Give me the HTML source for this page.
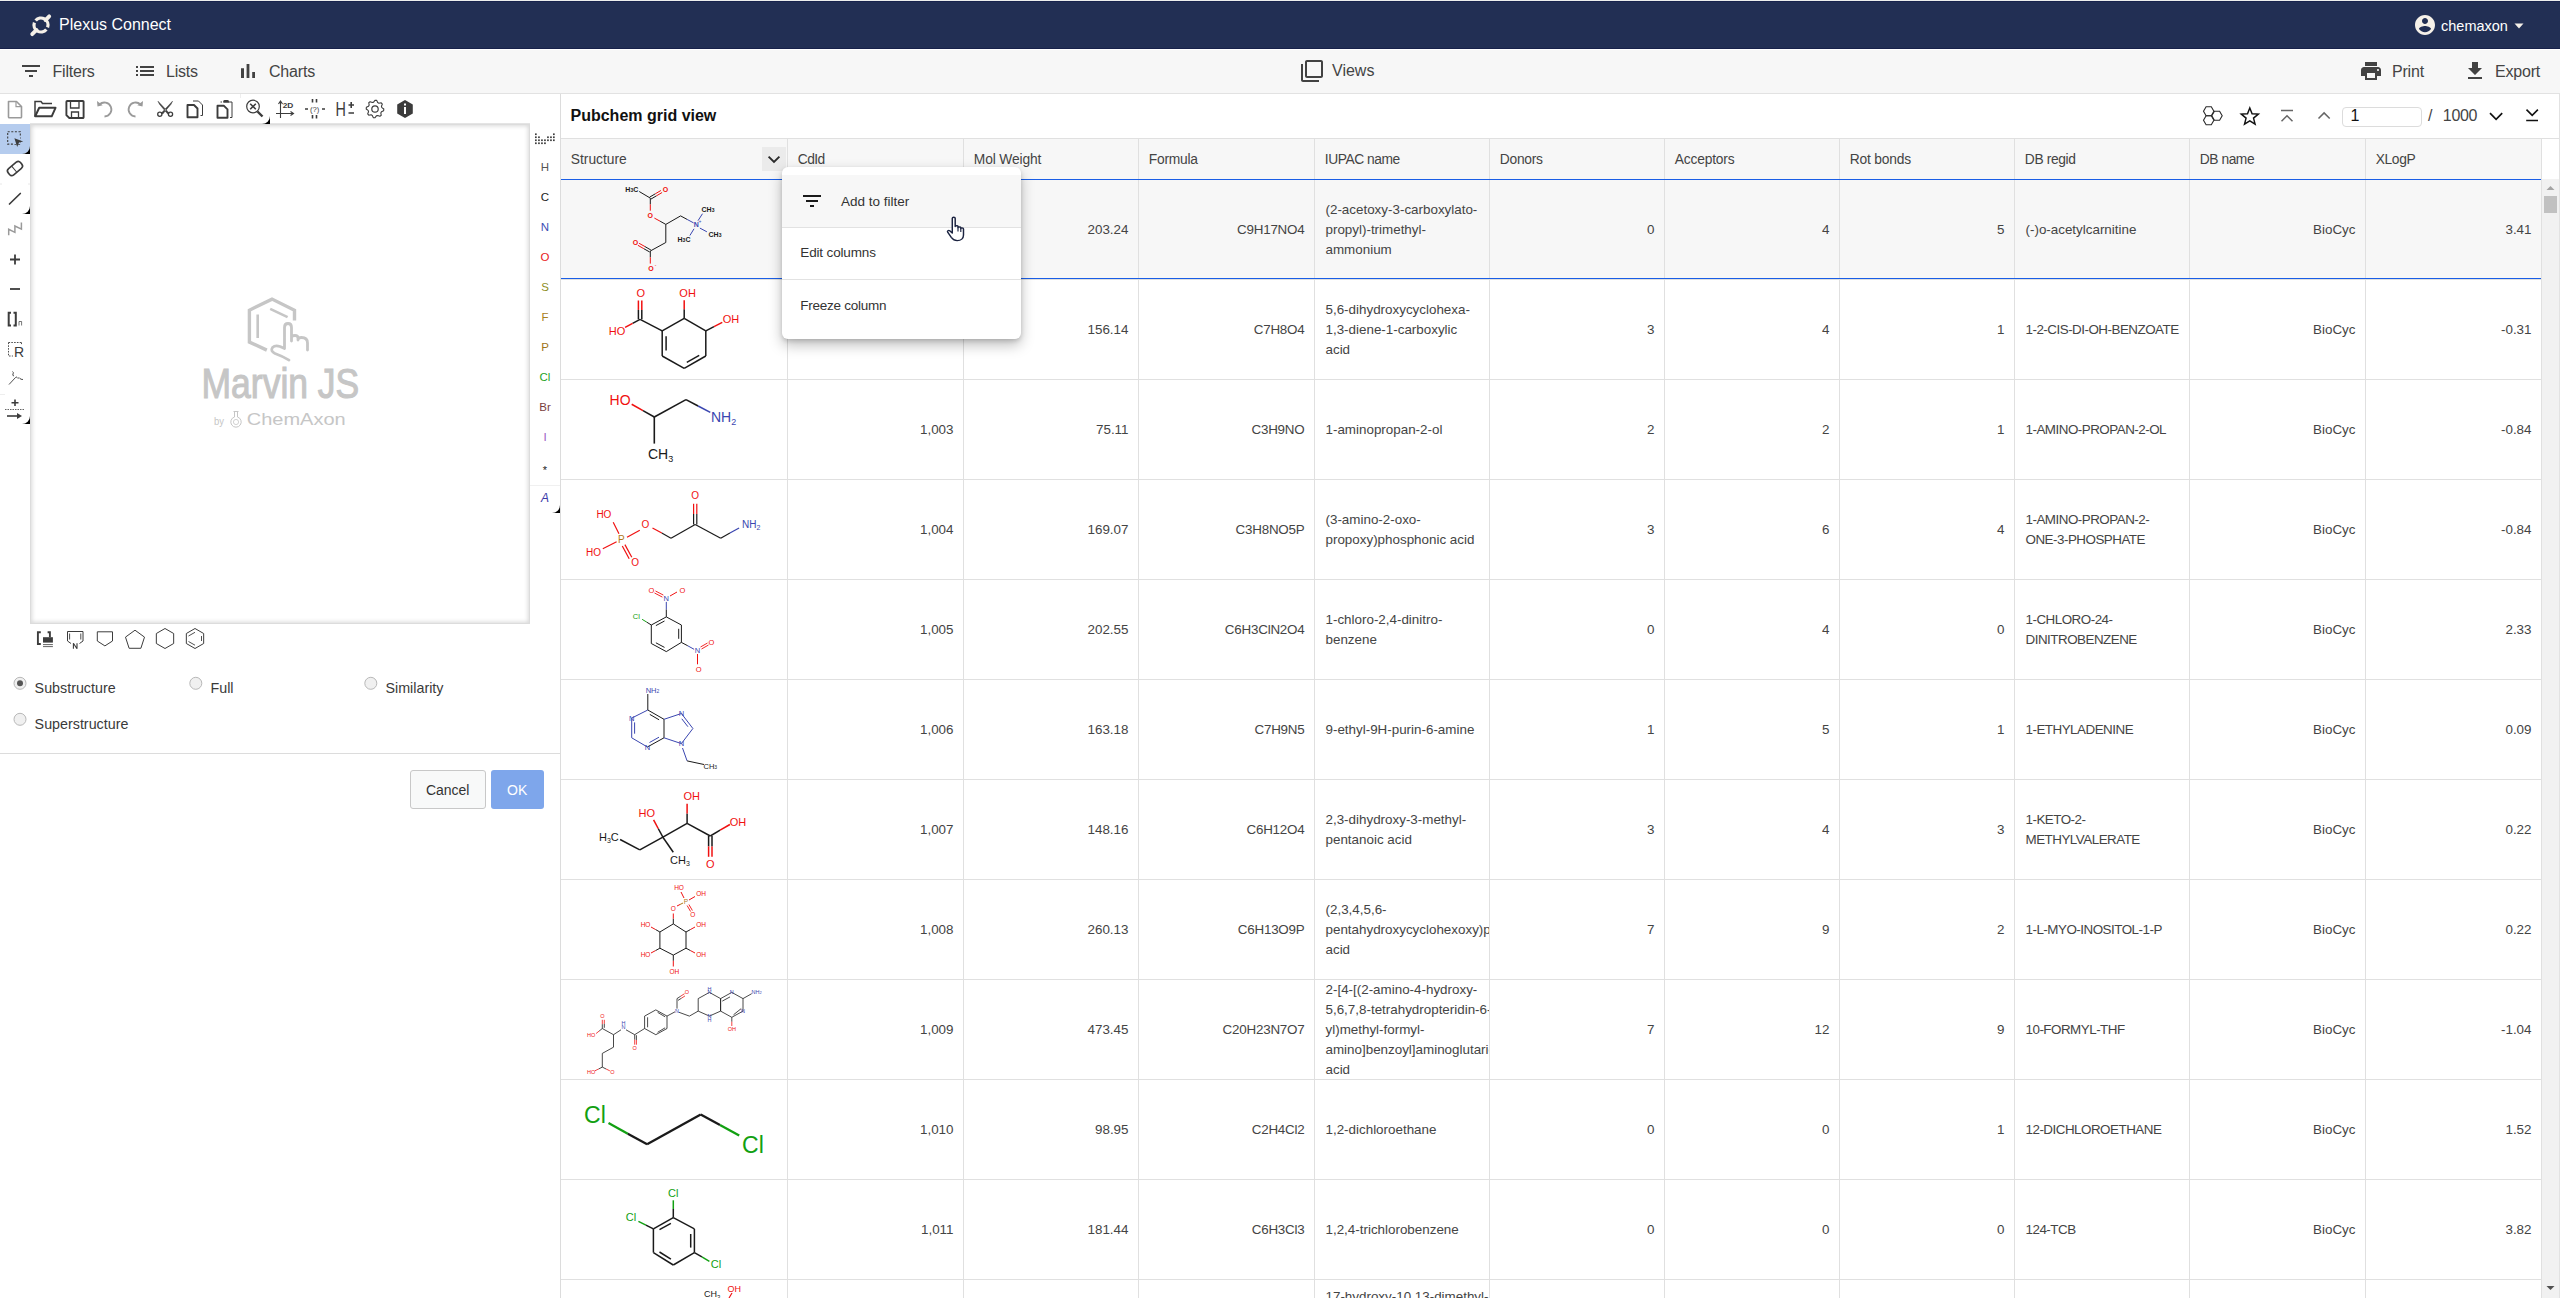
<!DOCTYPE html>
<html><head><meta charset="utf-8"><style>
*{box-sizing:border-box}
html,body{margin:0;padding:0;width:2560px;height:1298px;overflow:hidden;background:#fff;font-family:"Liberation Sans",sans-serif;color:#333}
.a{position:absolute}
.t{position:absolute;line-height:1;white-space:nowrap}
svg{position:absolute;overflow:visible}
</style></head><body>
<div class="a" style="left:0;top:0;width:2560px;height:48px;background:#222f54"></div>
<div class="a" style="left:0;top:47.5px;width:2560px;height:1px;background:#17214a"></div>
<div class="a" style="left:0;top:0;width:2560px;height:1px;background:#edefed"></div>
<div class="a" style="left:0;top:1px;width:2560px;height:1px;background:#18234d"></div>
<svg style="left:0;top:0" width="60" height="48"><path d="M35.64 20.5 A7 7 0 0 1 47.58 27.39" fill="none" stroke="#f5f0e8" stroke-width="3.2"/><path d="M46.36 29.5 A7 7 0 0 1 34.42 22.6" fill="none" stroke="#f5f0e8" stroke-width="3.2"/><line x1="32.2" y1="34.2" x2="36.5" y2="29.9" stroke="#f5f0e8" stroke-width="3.8" stroke-linecap="round"/><line x1="45.5" y1="20.1" x2="49.2" y2="16.3" stroke="#f5f0e8" stroke-width="3.8" stroke-linecap="round"/></svg>
<div class="t" style="left:59.0px;top:16.9px;font-size:16px;color:#ffffff;font-weight:400;">Plexus Connect</div>
<svg style="left:2413px;top:13px" width="24" height="24" viewBox="0 0 24 24"><path fill="#f5f0e8" d="M12 2C6.48 2 2 6.48 2 12s4.48 10 10 10 10-4.48 10-10S17.52 2 12 2zm0 3c1.66 0 3 1.34 3 3s-1.34 3-3 3-3-1.34-3-3 1.34-3 3-3zm0 14.2c-2.5 0-4.71-1.28-6-3.22.03-1.99 4-3.08 6-3.08 1.99 0 5.97 1.09 6 3.08-1.29 1.94-3.5 3.22-6 3.22z"/></svg>
<div class="t" style="left:2441.0px;top:18.7px;font-size:14.5px;color:#ffffff;font-weight:400;">chemaxon</div>
<svg style="left:2513.5px;top:22.5px" width="10" height="6" viewBox="0 0 10 6"><path d="M0.5 0.5h9L5 5.5z" fill="#f5f0e8"/></svg>
<div class="a" style="left:0;top:49px;width:2560px;height:1px;background:#ffffff"></div>
<div class="a" style="left:0;top:50px;width:2560px;height:43px;background:#f7f7f7"></div>
<div class="a" style="left:0;top:93px;width:2560px;height:1px;background:#e2e2e2"></div>
<svg style="left:19px;top:59px" width="24" height="24" viewBox="0 0 24 24"><path fill="#424242" d="M10 18h4v-2h-4v2zM3 6v2h18V6H3zm3 7h12v-2H6v2z"/></svg>
<div class="t" style="left:52.5px;top:64.4px;font-size:16px;color:#444;font-weight:400;letter-spacing:-0.2px">Filters</div>
<svg style="left:133px;top:59px" width="24" height="24" viewBox="0 0 24 24"><path fill="#424242" d="M3 13h2v-2H3v2zm0 4h2v-2H3v2zm0-8h2V7H3v2zm4 4h14v-2H7v2zm0 4h14v-2H7v2zM7 7v2h14V7H7z"/></svg>
<div class="t" style="left:166.0px;top:64.4px;font-size:16px;color:#444;font-weight:400;letter-spacing:-0.2px">Lists</div>
<svg style="left:236px;top:59px" width="24" height="24" viewBox="0 0 24 24"><path fill="#424242" d="M5 9.2h3V19H5zM10.6 5h2.8v14h-2.8zm5.6 8H19v6h-2.8z"/></svg>
<div class="t" style="left:269.0px;top:64.4px;font-size:16px;color:#444;font-weight:400;letter-spacing:-0.2px">Charts</div>
<svg style="left:1300px;top:59px" width="24" height="24" viewBox="0 0 24 24"><path fill="#424242" d="M3 5H1v16c0 1.1.9 2 2 2h16v-2H3V5zm18-4H7c-1.1 0-2 .9-2 2v14c0 1.1.9 2 2 2h14c1.1 0 2-.9 2-2V3c0-1.1-.9-2-2-2zm0 16H7V3h14v14z"/></svg>
<div class="t" style="left:1332.0px;top:63.4px;font-size:16px;color:#444;font-weight:400;">Views</div>
<svg style="left:2359px;top:59px" width="24" height="24" viewBox="0 0 24 24"><path fill="#424242" d="M19 8H5c-1.66 0-3 1.34-3 3v6h4v4h12v-4h4v-6c0-1.66-1.34-3-3-3zm-3 11H8v-5h8v5zm3-7c-.55 0-1-.45-1-1s.45-1 1-1 1 .45 1 1-.45 1-1 1zm-1-9H6v4h12V3z"/></svg>
<div class="t" style="left:2392.0px;top:64.4px;font-size:16px;color:#444;font-weight:400;letter-spacing:-0.2px">Print</div>
<svg style="left:2463px;top:59px" width="24" height="24" viewBox="0 0 24 24"><path fill="#424242" d="M19 9h-4V3H9v6H5l7 7 7-7zM5 18v2h14v-2H5z"/></svg>
<div class="t" style="left:2495.0px;top:64.4px;font-size:16px;color:#444;font-weight:400;letter-spacing:-0.2px">Export</div>
<div class="a" style="left:0;top:94px;width:560px;height:1204px;background:#fff"></div>
<div class="a" style="left:30px;top:123px;width:500px;height:2px;background:#e4e4e4"></div>
<div class="a" style="left:30px;top:124px;width:500px;height:500px;background:#fff;box-shadow:inset 0 0 4px 1px #d8d8d8;border:1px solid #dcdcdc"></div>
<svg style="left:0;top:0" width="560" height="130"><path d="M8.5 101.5h8l5 5v10.5a0.8 0.8 0 0 1-0.8 0.8h-11.4a0.8 0.8 0 0 1-0.8-0.8z" fill="none" stroke="#9a9a9a" stroke-width="1.6" stroke-linejoin="round"/><path d="M16 101.5v5.2h5.5" fill="none" stroke="#9a9a9a" stroke-width="1.2"/><path d="M35 116.5v-15h6l1.5 2h9.5" fill="none" stroke="#3c3c3c" stroke-width="1.5"/><path d="M35.2 116.3l4-8.5h16.3l-3.8 8.5z" fill="none" stroke="#3c3c3c" stroke-width="2" stroke-linejoin="round"/><path d="M67.2 101h15.6a0.8 0.8 0 0 1 .8.8v15.4a.8.8 0 0 1-.8.8h-13.5l-2.9-2.9v-13.3a.8.8 0 0 1 .8-.8z" fill="none" stroke="#3c3c3c" stroke-width="1.9"/><path d="M70.5 101.5v6.5h8.5v-6.5M71.5 117.5v-5.5h7v5.5" fill="none" stroke="#3c3c3c" stroke-width="1.3"/><path d="M99.5 104.5 a7 7 0 1 1 5 12" fill="none" stroke="#9a9a9a" stroke-width="1.8"/><path d="M97 101l0.5 5.5l5.2-1.2z" fill="#9a9a9a"/><path d="M140.5 104.5 a7 7 0 1 0 -5 12" fill="none" stroke="#9a9a9a" stroke-width="1.8"/><path d="M143 101l-0.5 5.5l-5.2-1.2z" fill="#9a9a9a"/><path d="M158 101.2L169.3 113.2L167.7 114L159.5 104.3z M172.5 101.2L161.2 113.2L162.8 114L171 104.3z" fill="#3c3c3c" stroke="#3c3c3c" stroke-width="0.5" stroke-linejoin="round"/><circle cx="159.8" cy="114.3" r="2.1" fill="none" stroke="#3c3c3c" stroke-width="1.3"/><circle cx="170.5" cy="114.3" r="2.1" fill="none" stroke="#3c3c3c" stroke-width="1.3"/><path d="M193 101h5.5l4 4v10.5h-2" fill="none" stroke="#3c3c3c" stroke-width="1"/><path d="M187.5 105h6.5l3.5 3.5v8.7h-10z" fill="none" stroke="#3c3c3c" stroke-width="1.9" stroke-linejoin="round"/><path d="M222 102h-1.5M228.5 102h3.5v15.5h-2" fill="none" stroke="#3c3c3c" stroke-width="1"/><path d="M223.3 102.8v-1.5q0-1.2 1.5-1.2h2.6q1.5 0 1.5 1.2v1.5z" fill="#3c3c3c"/><path d="M217.5 105.8h6.5l3.5 3.5v8.5h-10z" fill="none" stroke="#3c3c3c" stroke-width="1.9" stroke-linejoin="round"/><line x1="240.5" y1="94" x2="240.5" y2="98" stroke="#eeeeee" stroke-width="1"/><circle cx="253" cy="106.5" r="6.3" fill="none" stroke="#3c3c3c" stroke-width="1.2"/><path d="M250.2 103.7l5.6 5.6M255.8 103.7l-5.6 5.6" stroke="#3c3c3c" stroke-width="1.6"/><path d="M257.5 111.5l5 5" stroke="#3c3c3c" stroke-width="2.4"/><path d="M270 116v8h-8a8 8 0 0 0 8-8z" fill="#000"/><path d="M280.5 118v-16.5M278.5 104l2-3 2 3M276 113.5h17.5M290.5 111.5l3 2-3 2" fill="none" stroke="#3c3c3c" stroke-width="1.1"/><text x="282.7" y="107.6" font-size="8" font-weight="bold" fill="#3c3c3c" font-family="Liberation Sans" textLength="10.7" lengthAdjust="spacingAndGlyphs">2D</text><path d="M312.5 99v3.5M316.5 99v3.5M312.5 115v3.5M316.5 115v3.5M305 109h3M322 109h3" stroke="#3c3c3c" stroke-width="1.6"/><text x="310" y="111.8" font-size="7" fill="#3c3c3c" font-family="Liberation Sans" textLength="9.4" lengthAdjust="spacingAndGlyphs">(?)</text><text x="335.6" y="115.9" font-size="19.6" fill="#3c3c3c" font-family="Liberation Sans" textLength="10.4" lengthAdjust="spacingAndGlyphs">H</text><path d="M348.5 105h5.5M351.2 102v6M348.5 113h5.5" stroke="#3c3c3c" stroke-width="1.6"/><polygon points="383.80,109.00 383.63,110.72 381.47,111.68 380.82,112.89 381.22,115.22 379.89,116.32 377.68,115.47 376.37,115.87 375.00,117.80 373.28,117.63 372.32,115.47 371.11,114.82 368.78,115.22 367.68,113.89 368.53,111.68 368.13,110.37 366.20,109.00 366.37,107.28 368.53,106.32 369.18,105.11 368.78,102.78 370.11,101.68 372.32,102.53 373.63,102.13 375.00,100.20 376.72,100.37 377.68,102.53 378.89,103.18 381.22,102.78 382.32,104.11 381.47,106.32 381.87,107.63" fill="none" stroke="#3c3c3c" stroke-width="1.1" stroke-linejoin="round"/><circle cx="375" cy="109" r="3.2" fill="none" stroke="#3c3c3c" stroke-width="1.2"/><polygon points="405.00,118.00 397.21,113.50 397.21,104.50 405.00,100.00 412.79,104.50 412.79,113.50" fill="#3c3c3c"/><rect x="404" y="103.5" width="2" height="2" fill="#fff"/><rect x="404" y="107" width="2" height="7" fill="#fff"/></svg>
<svg style="left:0;top:0" width="30" height="430"><path d="M0 124h30v22a8 8 0 0 1-8 8h-22z" fill="#b5ccee"/><path d="M30 146v8h-8a8 8 0 0 0 8-8z" fill="#000"/><rect x="7.7" y="131.7" width="12.6" height="12.4" fill="none" stroke="#3c3c3c" stroke-width="1.1" stroke-dasharray="2 1.6"/><rect x="13.5" y="137" width="7" height="7" fill="#b5ccee"/><path d="M14.4 138.2L23.2 141.6L19 142.6L17.2 147.1z" fill="#3c3c3c"/><g transform="rotate(-40 15 168.5)"><rect x="7" y="164.5" width="16" height="8" rx="3" fill="none" stroke="#3c3c3c" stroke-width="1.6"/><line x1="14" y1="164.5" x2="14" y2="172.5" stroke="#3c3c3c" stroke-width="1"/></g><line x1="0" y1="184" x2="2" y2="184" stroke="#e8e8e8"/><line x1="28" y1="184" x2="30" y2="184" stroke="#e8e8e8"/><line x1="9.5" y1="204" x2="20.3" y2="193.5" stroke="#3c3c3c" stroke-width="1.7" stroke-linecap="round"/><path d="M30 206v8h-8a8 8 0 0 0 8-8z" fill="#000"/><path d="M8.7 235.2V229.3L14.9 232.4V226L21.4 229.1V222.6" fill="none" stroke="#9a9a9a" stroke-width="1.5" stroke-linejoin="miter"/><path d="M10 259.5h10M15 254.5v10" stroke="#3c3c3c" stroke-width="1.8"/><path d="M10 289h10" stroke="#3c3c3c" stroke-width="1.8"/><path d="M11 312.8h-2.3v12.6h2.3M13.5 312.8h2.3v12.6h-2.3" fill="none" stroke="#3c3c3c" stroke-width="2"/><path d="M19 325.5v-4h2.6v4" fill="none" stroke="#3c3c3c" stroke-width="0.7"/><path d="M8.5 342.5h13.5M8.5 342.5v13.5h4.5M21.5 342.5v2" fill="none" stroke="#3c3c3c" stroke-width="0.9" stroke-dasharray="1.6 1.2"/><text x="14" y="357" font-size="14" fill="#3c3c3c" font-family="Liberation Sans">R</text><path d="M9 384.5l6.5-7 q1-1 1.5 0 q0.5 1 1.5 0.5 q1-0.5 1.5 0.5 q0.5 1 3 1M12.5 371.5q1.5 1 0.5 2.5 q-1 1.5 1 2" fill="none" stroke="#3c3c3c" stroke-width="0.9"/><line x1="0" y1="394.5" x2="5" y2="394.5" stroke="#eee"/><path d="M11.5 402.8h7M15 399.5v6.5" stroke="#3c3c3c" stroke-width="1.6"/><line x1="5" y1="409.5" x2="25" y2="409.5" stroke="#3c3c3c" stroke-width="0.8" stroke-dasharray="1.5 1"/><path d="M7 416h11" stroke="#3c3c3c" stroke-width="1.6"/><path d="M17 413l5 3-5 3z" fill="#3c3c3c"/><path d="M30 416v8h-8a8 8 0 0 0 8-8z" fill="#000"/></svg>
<svg style="left:0;top:0" width="560" height="520"><rect x="535.0" y="133.4" width="1.7" height="1.7" fill="#3c3c3c"/><rect x="535.0" y="136.4" width="1.7" height="1.7" fill="#3c3c3c"/><rect x="535.0" y="139.4" width="1.7" height="1.7" fill="#3c3c3c"/><rect x="535.0" y="142.4" width="1.7" height="1.7" fill="#3c3c3c"/><rect x="538.1" y="136.4" width="1.7" height="1.7" fill="#3c3c3c"/><rect x="538.1" y="139.4" width="1.7" height="1.7" fill="#3c3c3c"/><rect x="538.1" y="142.4" width="1.7" height="1.7" fill="#3c3c3c"/><rect x="541.1" y="139.4" width="1.7" height="1.7" fill="#3c3c3c"/><rect x="541.1" y="142.4" width="1.7" height="1.7" fill="#3c3c3c"/><rect x="544.1" y="139.4" width="1.7" height="1.7" fill="#3c3c3c"/><rect x="544.1" y="142.4" width="1.7" height="1.7" fill="#3c3c3c"/><rect x="547.1" y="136.4" width="1.7" height="1.7" fill="#3c3c3c"/><rect x="547.1" y="139.4" width="1.7" height="1.7" fill="#3c3c3c"/><rect x="550.1" y="136.4" width="1.7" height="1.7" fill="#3c3c3c"/><rect x="550.1" y="139.4" width="1.7" height="1.7" fill="#3c3c3c"/><rect x="553.0" y="133.4" width="1.7" height="1.7" fill="#3c3c3c"/><rect x="553.0" y="136.4" width="1.7" height="1.7" fill="#3c3c3c"/><rect x="553.0" y="139.4" width="1.7" height="1.7" fill="#3c3c3c"/></svg>
<div class="t" style="left:345.0px;width:400px;text-align:center;top:162.1px;font-size:11.5px;color:#555;font-weight:400;">H</div>
<div class="t" style="left:345.0px;width:400px;text-align:center;top:192.1px;font-size:11.5px;color:#222;font-weight:400;">C</div>
<div class="t" style="left:345.0px;width:400px;text-align:center;top:222.1px;font-size:11.5px;color:#3d4fb5;font-weight:400;">N</div>
<div class="t" style="left:345.0px;width:400px;text-align:center;top:252.1px;font-size:11.5px;color:#e8201c;font-weight:400;">O</div>
<div class="t" style="left:345.0px;width:400px;text-align:center;top:282.1px;font-size:11.5px;color:#8d8d1e;font-weight:400;">S</div>
<div class="t" style="left:345.0px;width:400px;text-align:center;top:312.1px;font-size:11.5px;color:#a8801c;font-weight:400;">F</div>
<div class="t" style="left:345.0px;width:400px;text-align:center;top:342.1px;font-size:11.5px;color:#a07418;font-weight:400;">P</div>
<div class="t" style="left:345.0px;width:400px;text-align:center;top:372.1px;font-size:11.5px;color:#1fa31f;font-weight:400;">Cl</div>
<div class="t" style="left:345.0px;width:400px;text-align:center;top:402.1px;font-size:11.5px;color:#7a3e3e;font-weight:400;">Br</div>
<div class="t" style="left:345.0px;width:400px;text-align:center;top:432.1px;font-size:11.5px;color:#9b5cc4;font-weight:400;">I</div>
<div class="t" style="left:345.0px;width:400px;text-align:center;top:464.7px;font-size:11px;color:#222;font-weight:400;">*</div>
<div class="t" style="left:345.0px;width:400px;text-align:center;top:491.6px;font-size:12px;color:#3a3aa8;font-weight:400;font-style:italic">A</div>
<svg style="left:530px;top:480px" width="30" height="40"><line x1="0" y1="5.5" x2="30" y2="5.5" stroke="#f0f0f0"/><path d="M30 25v8h-8a8 8 0 0 0 8-8z" fill="#000"/></svg>
<svg style="left:0;top:0" width="560" height="660"><path d="M40.8 632.2h-2.9v11.8h2.9" fill="none" stroke="#3c3c3c" stroke-width="1.9"/><path d="M47.6 632.2h2.3v5" fill="none" stroke="#3c3c3c" stroke-width="1.9"/><rect x="43" y="637.2" width="9.9" height="5.4" fill="#3c3c3c"/><path d="M43 644.6h9.9M43 646.6h9.9" stroke="#3c3c3c" stroke-width="0.8"/><path d="M71 643.5l-3.5-2.5v-9.5h15.5v9.5l-3.5 2.5" fill="none" stroke="#3c3c3c" stroke-width="1"/><path d="M69.6 633.5v6M80.8 633.5v6" stroke="#3c3c3c" stroke-width="0.9"/><path d="M73.4 648.8v-5.6l3.6 5.6v-5.6" fill="none" stroke="#3c3c3c" stroke-width="1.1" stroke-linejoin="bevel"/><path d="M97.3 631.8h15.2v9.2l-7.6 4.9-7.6-4.9z" fill="none" stroke="#3c3c3c" stroke-width="1"/><polygon points="135.00,630.20 144.51,637.11 140.88,648.29 129.12,648.29 125.49,637.11" fill="none" stroke="#3c3c3c" stroke-width="1"/><polygon points="165.00,628.50 173.66,633.50 173.66,643.50 165.00,648.50 156.34,643.50 156.34,633.50" fill="none" stroke="#3c3c3c" stroke-width="1"/><polygon points="195.00,628.50 203.66,633.50 203.66,643.50 195.00,648.50 186.34,643.50 186.34,633.50" fill="none" stroke="#3c3c3c" stroke-width="1"/><path d="M188.5 636l6.5-3.7M201.5 636v5M188.5 641.5l6.5 3.7" fill="none" stroke="#3c3c3c" stroke-width="0.9"/></svg>
<svg style="left:0;top:0" width="560" height="440"><path d="M266.8 350.1L249.4 342.1V310.2L272 299.1L294.5 310.2V320.6" fill="none" stroke="#c6c6c6" stroke-width="3.4" stroke-linejoin="miter"/><path d="M257.7 314.4V337.9M270.2 308.8L287.6 317.1" fill="none" stroke="#c6c6c6" stroke-width="2.6"/><path d="M289 360.1 Q282 356 275 353.5 Q270 351 272.5 347.5 Q275 345 280 346.5 L284.5 348.5 V327.5 Q284.5 323.5 288 323.5 Q291.5 323.5 291.5 327.5 V341 V337.5 Q291.5 335.5 295 335.5 Q298 335.5 298 338 V340 Q298 337.5 301.5 337.5 Q307.5 337.5 307.5 343 V350" fill="none" stroke="#c6c6c6" stroke-width="2.8" stroke-linecap="round" stroke-linejoin="round"/><text x="201.5" y="398.3" font-size="42" fill="#c6c6c6" stroke="#c6c6c6" stroke-width="1.1" textLength="157.8" lengthAdjust="spacingAndGlyphs" font-family="Liberation Sans">Marvin JS</text><text x="214" y="425.3" font-size="11" fill="#c6c6c6" font-family="Liberation Sans" textLength="10" lengthAdjust="spacingAndGlyphs">by</text><path d="M234.5 411.5v5.5a5.2 5.2 0 1 0 3 0v-5.5M233.5 411.5h5" fill="none" stroke="#c6c6c6" stroke-width="1"/><circle cx="236" cy="422" r="2.6" fill="none" stroke="#c6c6c6" stroke-width="0.8"/><text x="246.7" y="425.3" font-size="17" fill="#c6c6c6" font-family="Liberation Sans" textLength="99" lengthAdjust="spacingAndGlyphs">ChemAxon</text></svg>
<svg style="left:0;top:0" width="560" height="740"><circle cx="20" cy="683.3" r="6" fill="#f0f0f0" stroke="#b8b8b8" stroke-width="1"/><circle cx="20" cy="683.3" r="3" fill="#555"/><circle cx="195.8" cy="683.3" r="6" fill="#f0f0f0" stroke="#b8b8b8" stroke-width="1"/><circle cx="370.8" cy="683.3" r="6" fill="#f0f0f0" stroke="#b8b8b8" stroke-width="1"/><circle cx="20" cy="719.3" r="6" fill="#f0f0f0" stroke="#b8b8b8" stroke-width="1"/></svg>
<div class="t" style="left:34.6px;top:680.9px;font-size:14.3px;color:#3a3a3a;font-weight:400;">Substructure</div>
<div class="t" style="left:210.5px;top:680.9px;font-size:14.3px;color:#3a3a3a;font-weight:400;">Full</div>
<div class="t" style="left:385.5px;top:680.9px;font-size:14.3px;color:#3a3a3a;font-weight:400;">Similarity</div>
<div class="t" style="left:34.6px;top:716.9px;font-size:14.3px;color:#3a3a3a;font-weight:400;">Superstructure</div>
<div class="a" style="left:0;top:753px;width:560px;height:1px;background:#dcdcdc"></div>
<div class="a" style="left:409.5px;top:770px;width:76.5px;height:38.5px;background:#f8f9f9;border:1px solid #c8c8c8;border-radius:3px"></div>
<div class="t" style="left:426.0px;top:782.8px;font-size:14px;color:#333;font-weight:400;letter-spacing:-0.02px">Cancel</div>
<div class="a" style="left:490.5px;top:770px;width:53.5px;height:38.5px;background:#7ea6eb;border-radius:3px"></div>
<div class="t" style="left:507.0px;top:782.8px;font-size:14px;color:#ffffff;font-weight:400;">OK</div>
<div class="a" style="left:560px;top:94px;width:1px;height:1204px;background:#dcdcdc"></div>
<div class="t" style="left:570.5px;top:108.1px;font-size:16px;color:#111;font-weight:700;">Pubchem grid view</div>
<svg style="left:0;top:0" width="2560" height="140"><polygon points="2213.90,111.30 2211.30,115.80 2206.10,115.80 2203.50,111.30 2206.10,106.80 2211.30,106.80" fill="none" stroke="#2a2a2a" stroke-width="1.1"/><polygon points="2213.90,120.30 2211.30,124.80 2206.10,124.80 2203.50,120.30 2206.10,115.80 2211.30,115.80" fill="none" stroke="#2a2a2a" stroke-width="1.1"/><polygon points="2222.20,115.80 2219.60,120.30 2214.40,120.30 2211.80,115.80 2214.40,111.30 2219.60,111.30" fill="none" stroke="#2a2a2a" stroke-width="1.1"/><polygon points="2249.80,107.90 2252.09,113.74 2258.36,114.12 2253.51,118.11 2255.09,124.18 2249.80,120.80 2244.51,124.18 2246.09,118.11 2241.24,114.12 2247.51,113.74" fill="none" stroke="#111" stroke-width="1.45" stroke-linejoin="miter"/><path d="M2281 110.5h12M2281.5 121.2l5.5-5.5 5.5 5.5" fill="none" stroke="#666" stroke-width="1.5"/><path d="M2318.5 118.5l5.6-5.6 5.6 5.6" fill="none" stroke="#666" stroke-width="1.5"/><path d="M2490 113.2l6.1 6.1 6.1-6.1" fill="none" stroke="#111" stroke-width="1.7"/><path d="M2526.5 109.6l5.7 5.7 5.7-5.7M2526.2 120.5h11.8" fill="none" stroke="#111" stroke-width="1.6"/></svg>
<div class="a" style="left:2342.2px;top:107px;width:79.5px;height:19.5px;border:1px solid #dcdcdc;border-radius:4px;background:#fff"></div>
<div class="t" style="left:2350.5px;top:108.4px;font-size:16px;color:#111;font-weight:400;">1</div>
<div class="t" style="left:2428.0px;top:108.4px;font-size:16px;color:#444;font-weight:400;">/</div>
<div class="t" style="left:2442.8px;top:108.4px;font-size:16px;color:#444;font-weight:400;letter-spacing:-0.3px">1000</div>
<div class="a" style="left:561px;top:138px;width:1998px;height:1px;background:#e0e0e0"></div>
<div class="a" style="left:561px;top:139px;width:1980px;height:40px;background:#f7f7f7"></div>
<div class="a" style="left:2558.5px;top:94px;width:1.5px;height:1204px;background:#e2e2e2"></div>
<div class="a" style="left:561px;top:180px;width:1980px;height:98px;background:#f7f7f7"></div>
<div class="a" style="left:787px;top:139px;width:1px;height:1159px;background:#e0e0e0"></div>
<div class="a" style="left:963px;top:139px;width:1px;height:1159px;background:#e0e0e0"></div>
<div class="a" style="left:1138px;top:139px;width:1px;height:1159px;background:#e0e0e0"></div>
<div class="a" style="left:1314px;top:139px;width:1px;height:1159px;background:#e0e0e0"></div>
<div class="a" style="left:1489px;top:139px;width:1px;height:1159px;background:#e0e0e0"></div>
<div class="a" style="left:1664px;top:139px;width:1px;height:1159px;background:#e0e0e0"></div>
<div class="a" style="left:1839px;top:139px;width:1px;height:1159px;background:#e0e0e0"></div>
<div class="a" style="left:2014px;top:139px;width:1px;height:1159px;background:#e0e0e0"></div>
<div class="a" style="left:2189px;top:139px;width:1px;height:1159px;background:#e0e0e0"></div>
<div class="a" style="left:2365px;top:139px;width:1px;height:1159px;background:#e0e0e0"></div>
<div class="a" style="left:2541px;top:139px;width:1px;height:1159px;background:#e0e0e0"></div>
<div class="a" style="left:561px;top:379px;width:1980px;height:1px;background:#e0e0e0"></div>
<div class="a" style="left:561px;top:479px;width:1980px;height:1px;background:#e0e0e0"></div>
<div class="a" style="left:561px;top:579px;width:1980px;height:1px;background:#e0e0e0"></div>
<div class="a" style="left:561px;top:679px;width:1980px;height:1px;background:#e0e0e0"></div>
<div class="a" style="left:561px;top:779px;width:1980px;height:1px;background:#e0e0e0"></div>
<div class="a" style="left:561px;top:879px;width:1980px;height:1px;background:#e0e0e0"></div>
<div class="a" style="left:561px;top:979px;width:1980px;height:1px;background:#e0e0e0"></div>
<div class="a" style="left:561px;top:1079px;width:1980px;height:1px;background:#e0e0e0"></div>
<div class="a" style="left:561px;top:1179px;width:1980px;height:1px;background:#e0e0e0"></div>
<div class="a" style="left:561px;top:1279px;width:1980px;height:1px;background:#e0e0e0"></div>
<div class="a" style="left:561px;top:279px;width:1980px;height:1px;background:#e0e0e0"></div>
<div class="a" style="left:561px;top:179px;width:1980px;height:1.2px;background:#1a5ee6"></div>
<div class="a" style="left:561px;top:278px;width:1980px;height:1.2px;background:#1a5ee6"></div>
<div class="t" style="left:570.8px;top:152.5px;font-size:13.8px;color:#444;font-weight:400;letter-spacing:0px">Structure</div>
<div class="t" style="left:797.8px;top:152.5px;font-size:13.8px;color:#444;font-weight:400;letter-spacing:-0.55px">CdId</div>
<div class="t" style="left:973.8px;top:152.5px;font-size:13.8px;color:#444;font-weight:400;letter-spacing:-0.13px">Mol Weight</div>
<div class="t" style="left:1148.8px;top:152.5px;font-size:13.8px;color:#444;font-weight:400;letter-spacing:-0.23px">Formula</div>
<div class="t" style="left:1324.8px;top:152.5px;font-size:13.8px;color:#444;font-weight:400;letter-spacing:-0.45px">IUPAC name</div>
<div class="t" style="left:1499.8px;top:152.5px;font-size:13.8px;color:#444;font-weight:400;letter-spacing:-0.25px">Donors</div>
<div class="t" style="left:1674.8px;top:152.5px;font-size:13.8px;color:#444;font-weight:400;letter-spacing:-0.2px">Acceptors</div>
<div class="t" style="left:1849.8px;top:152.5px;font-size:13.8px;color:#444;font-weight:400;letter-spacing:-0.2px">Rot bonds</div>
<div class="t" style="left:2024.8px;top:152.5px;font-size:13.8px;color:#444;font-weight:400;letter-spacing:-0.36px">DB regid</div>
<div class="t" style="left:2199.8px;top:152.5px;font-size:13.8px;color:#444;font-weight:400;letter-spacing:-0.46px">DB name</div>
<div class="t" style="left:2375.8px;top:152.5px;font-size:13.8px;color:#444;font-weight:400;letter-spacing:-0.4px">XLogP</div>
<div class="a" style="left:762px;top:147px;width:24px;height:24px;background:#ebebeb"></div>
<svg style="left:762px;top:147px" width="24" height="24"><path d="M6.6 9.6l5.4 5.4 5.4-5.4" fill="none" stroke="#2a2a2a" stroke-width="1.9"/></svg>
<div class="t" style="right:1431.5px;top:222.6px;font-size:13.4px;color:#444;font-weight:400;text-align:right;">203.24</div>
<div class="t" style="right:1255.5px;top:222.6px;font-size:13.4px;color:#444;font-weight:400;text-align:right;letter-spacing:-0.22px">C9H17NO4</div>
<div class="t" style="right:905.5px;top:222.6px;font-size:13.4px;color:#444;font-weight:400;text-align:right;">0</div>
<div class="t" style="right:730.5px;top:222.6px;font-size:13.4px;color:#444;font-weight:400;text-align:right;">4</div>
<div class="t" style="right:555.5px;top:222.6px;font-size:13.4px;color:#444;font-weight:400;text-align:right;">5</div>
<div class="t" style="right:204.5px;top:222.6px;font-size:13.4px;color:#444;font-weight:400;text-align:right;">BioCyc</div>
<div class="t" style="right:28.5px;top:222.6px;font-size:13.4px;color:#444;font-weight:400;text-align:right;">3.41</div>
<div class="a" style="left:1315px;top:197px;width:174px;height:64px;overflow:hidden"><div class="t" style="left:10.5px;top:5.6px;font-size:13.4px;color:#444;font-weight:400;">(2-acetoxy-3-carboxylato-</div></div>
<div class="a" style="left:1315px;top:197px;width:174px;height:64px;overflow:hidden"><div class="t" style="left:10.5px;top:25.6px;font-size:13.4px;color:#444;font-weight:400;">propyl)-trimethyl-</div></div>
<div class="a" style="left:1315px;top:197px;width:174px;height:64px;overflow:hidden"><div class="t" style="left:10.5px;top:45.6px;font-size:13.4px;color:#444;font-weight:400;">ammonium</div></div>
<div class="a" style="left:2015px;top:217px;width:174px;height:24px;overflow:hidden"><div class="t" style="left:10.5px;top:5.6px;font-size:13.4px;color:#444;font-weight:400;">(-)o-acetylcarnitine</div></div>
<div class="t" style="right:1606.5px;top:322.6px;font-size:13.4px;color:#444;font-weight:400;text-align:right;">1,002</div>
<div class="t" style="right:1431.5px;top:322.6px;font-size:13.4px;color:#444;font-weight:400;text-align:right;">156.14</div>
<div class="t" style="right:1255.5px;top:322.6px;font-size:13.4px;color:#444;font-weight:400;text-align:right;letter-spacing:-0.22px">C7H8O4</div>
<div class="t" style="right:905.5px;top:322.6px;font-size:13.4px;color:#444;font-weight:400;text-align:right;">3</div>
<div class="t" style="right:730.5px;top:322.6px;font-size:13.4px;color:#444;font-weight:400;text-align:right;">4</div>
<div class="t" style="right:555.5px;top:322.6px;font-size:13.4px;color:#444;font-weight:400;text-align:right;">1</div>
<div class="t" style="right:204.5px;top:322.6px;font-size:13.4px;color:#444;font-weight:400;text-align:right;">BioCyc</div>
<div class="t" style="right:28.5px;top:322.6px;font-size:13.4px;color:#444;font-weight:400;text-align:right;">-0.31</div>
<div class="a" style="left:1315px;top:297px;width:174px;height:64px;overflow:hidden"><div class="t" style="left:10.5px;top:5.6px;font-size:13.4px;color:#444;font-weight:400;">5,6-dihydroxycyclohexa-</div></div>
<div class="a" style="left:1315px;top:297px;width:174px;height:64px;overflow:hidden"><div class="t" style="left:10.5px;top:25.6px;font-size:13.4px;color:#444;font-weight:400;">1,3-diene-1-carboxylic</div></div>
<div class="a" style="left:1315px;top:297px;width:174px;height:64px;overflow:hidden"><div class="t" style="left:10.5px;top:45.6px;font-size:13.4px;color:#444;font-weight:400;">acid</div></div>
<div class="a" style="left:2015px;top:317px;width:174px;height:24px;overflow:hidden"><div class="t" style="left:10.5px;top:5.6px;font-size:13.4px;color:#444;font-weight:400;letter-spacing:-0.5px">1-2-CIS-DI-OH-BENZOATE</div></div>
<div class="t" style="right:1606.5px;top:422.6px;font-size:13.4px;color:#444;font-weight:400;text-align:right;">1,003</div>
<div class="t" style="right:1431.5px;top:422.6px;font-size:13.4px;color:#444;font-weight:400;text-align:right;">75.11</div>
<div class="t" style="right:1255.5px;top:422.6px;font-size:13.4px;color:#444;font-weight:400;text-align:right;letter-spacing:-0.22px">C3H9NO</div>
<div class="t" style="right:905.5px;top:422.6px;font-size:13.4px;color:#444;font-weight:400;text-align:right;">2</div>
<div class="t" style="right:730.5px;top:422.6px;font-size:13.4px;color:#444;font-weight:400;text-align:right;">2</div>
<div class="t" style="right:555.5px;top:422.6px;font-size:13.4px;color:#444;font-weight:400;text-align:right;">1</div>
<div class="t" style="right:204.5px;top:422.6px;font-size:13.4px;color:#444;font-weight:400;text-align:right;">BioCyc</div>
<div class="t" style="right:28.5px;top:422.6px;font-size:13.4px;color:#444;font-weight:400;text-align:right;">-0.84</div>
<div class="a" style="left:1315px;top:417px;width:174px;height:24px;overflow:hidden"><div class="t" style="left:10.5px;top:5.6px;font-size:13.4px;color:#444;font-weight:400;">1-aminopropan-2-ol</div></div>
<div class="a" style="left:2015px;top:417px;width:174px;height:24px;overflow:hidden"><div class="t" style="left:10.5px;top:5.6px;font-size:13.4px;color:#444;font-weight:400;letter-spacing:-0.5px">1-AMINO-PROPAN-2-OL</div></div>
<div class="t" style="right:1606.5px;top:522.6px;font-size:13.4px;color:#444;font-weight:400;text-align:right;">1,004</div>
<div class="t" style="right:1431.5px;top:522.6px;font-size:13.4px;color:#444;font-weight:400;text-align:right;">169.07</div>
<div class="t" style="right:1255.5px;top:522.6px;font-size:13.4px;color:#444;font-weight:400;text-align:right;letter-spacing:-0.22px">C3H8NO5P</div>
<div class="t" style="right:905.5px;top:522.6px;font-size:13.4px;color:#444;font-weight:400;text-align:right;">3</div>
<div class="t" style="right:730.5px;top:522.6px;font-size:13.4px;color:#444;font-weight:400;text-align:right;">6</div>
<div class="t" style="right:555.5px;top:522.6px;font-size:13.4px;color:#444;font-weight:400;text-align:right;">4</div>
<div class="t" style="right:204.5px;top:522.6px;font-size:13.4px;color:#444;font-weight:400;text-align:right;">BioCyc</div>
<div class="t" style="right:28.5px;top:522.6px;font-size:13.4px;color:#444;font-weight:400;text-align:right;">-0.84</div>
<div class="a" style="left:1315px;top:507px;width:174px;height:44px;overflow:hidden"><div class="t" style="left:10.5px;top:5.6px;font-size:13.4px;color:#444;font-weight:400;">(3-amino-2-oxo-</div></div>
<div class="a" style="left:1315px;top:507px;width:174px;height:44px;overflow:hidden"><div class="t" style="left:10.5px;top:25.6px;font-size:13.4px;color:#444;font-weight:400;">propoxy)phosphonic acid</div></div>
<div class="a" style="left:2015px;top:507px;width:174px;height:44px;overflow:hidden"><div class="t" style="left:10.5px;top:5.6px;font-size:13.4px;color:#444;font-weight:400;letter-spacing:-0.5px">1-AMINO-PROPAN-2-</div></div>
<div class="a" style="left:2015px;top:507px;width:174px;height:44px;overflow:hidden"><div class="t" style="left:10.5px;top:25.6px;font-size:13.4px;color:#444;font-weight:400;letter-spacing:-0.5px">ONE-3-PHOSPHATE</div></div>
<div class="t" style="right:1606.5px;top:622.6px;font-size:13.4px;color:#444;font-weight:400;text-align:right;">1,005</div>
<div class="t" style="right:1431.5px;top:622.6px;font-size:13.4px;color:#444;font-weight:400;text-align:right;">202.55</div>
<div class="t" style="right:1255.5px;top:622.6px;font-size:13.4px;color:#444;font-weight:400;text-align:right;letter-spacing:-0.22px">C6H3ClN2O4</div>
<div class="t" style="right:905.5px;top:622.6px;font-size:13.4px;color:#444;font-weight:400;text-align:right;">0</div>
<div class="t" style="right:730.5px;top:622.6px;font-size:13.4px;color:#444;font-weight:400;text-align:right;">4</div>
<div class="t" style="right:555.5px;top:622.6px;font-size:13.4px;color:#444;font-weight:400;text-align:right;">0</div>
<div class="t" style="right:204.5px;top:622.6px;font-size:13.4px;color:#444;font-weight:400;text-align:right;">BioCyc</div>
<div class="t" style="right:28.5px;top:622.6px;font-size:13.4px;color:#444;font-weight:400;text-align:right;">2.33</div>
<div class="a" style="left:1315px;top:607px;width:174px;height:44px;overflow:hidden"><div class="t" style="left:10.5px;top:5.6px;font-size:13.4px;color:#444;font-weight:400;">1-chloro-2,4-dinitro-</div></div>
<div class="a" style="left:1315px;top:607px;width:174px;height:44px;overflow:hidden"><div class="t" style="left:10.5px;top:25.6px;font-size:13.4px;color:#444;font-weight:400;">benzene</div></div>
<div class="a" style="left:2015px;top:607px;width:174px;height:44px;overflow:hidden"><div class="t" style="left:10.5px;top:5.6px;font-size:13.4px;color:#444;font-weight:400;letter-spacing:-0.5px">1-CHLORO-24-</div></div>
<div class="a" style="left:2015px;top:607px;width:174px;height:44px;overflow:hidden"><div class="t" style="left:10.5px;top:25.6px;font-size:13.4px;color:#444;font-weight:400;letter-spacing:-0.5px">DINITROBENZENE</div></div>
<div class="t" style="right:1606.5px;top:722.6px;font-size:13.4px;color:#444;font-weight:400;text-align:right;">1,006</div>
<div class="t" style="right:1431.5px;top:722.6px;font-size:13.4px;color:#444;font-weight:400;text-align:right;">163.18</div>
<div class="t" style="right:1255.5px;top:722.6px;font-size:13.4px;color:#444;font-weight:400;text-align:right;letter-spacing:-0.22px">C7H9N5</div>
<div class="t" style="right:905.5px;top:722.6px;font-size:13.4px;color:#444;font-weight:400;text-align:right;">1</div>
<div class="t" style="right:730.5px;top:722.6px;font-size:13.4px;color:#444;font-weight:400;text-align:right;">5</div>
<div class="t" style="right:555.5px;top:722.6px;font-size:13.4px;color:#444;font-weight:400;text-align:right;">1</div>
<div class="t" style="right:204.5px;top:722.6px;font-size:13.4px;color:#444;font-weight:400;text-align:right;">BioCyc</div>
<div class="t" style="right:28.5px;top:722.6px;font-size:13.4px;color:#444;font-weight:400;text-align:right;">0.09</div>
<div class="a" style="left:1315px;top:717px;width:174px;height:24px;overflow:hidden"><div class="t" style="left:10.5px;top:5.6px;font-size:13.4px;color:#444;font-weight:400;">9-ethyl-9H-purin-6-amine</div></div>
<div class="a" style="left:2015px;top:717px;width:174px;height:24px;overflow:hidden"><div class="t" style="left:10.5px;top:5.6px;font-size:13.4px;color:#444;font-weight:400;letter-spacing:-0.5px">1-ETHYLADENINE</div></div>
<div class="t" style="right:1606.5px;top:822.6px;font-size:13.4px;color:#444;font-weight:400;text-align:right;">1,007</div>
<div class="t" style="right:1431.5px;top:822.6px;font-size:13.4px;color:#444;font-weight:400;text-align:right;">148.16</div>
<div class="t" style="right:1255.5px;top:822.6px;font-size:13.4px;color:#444;font-weight:400;text-align:right;letter-spacing:-0.22px">C6H12O4</div>
<div class="t" style="right:905.5px;top:822.6px;font-size:13.4px;color:#444;font-weight:400;text-align:right;">3</div>
<div class="t" style="right:730.5px;top:822.6px;font-size:13.4px;color:#444;font-weight:400;text-align:right;">4</div>
<div class="t" style="right:555.5px;top:822.6px;font-size:13.4px;color:#444;font-weight:400;text-align:right;">3</div>
<div class="t" style="right:204.5px;top:822.6px;font-size:13.4px;color:#444;font-weight:400;text-align:right;">BioCyc</div>
<div class="t" style="right:28.5px;top:822.6px;font-size:13.4px;color:#444;font-weight:400;text-align:right;">0.22</div>
<div class="a" style="left:1315px;top:807px;width:174px;height:44px;overflow:hidden"><div class="t" style="left:10.5px;top:5.6px;font-size:13.4px;color:#444;font-weight:400;">2,3-dihydroxy-3-methyl-</div></div>
<div class="a" style="left:1315px;top:807px;width:174px;height:44px;overflow:hidden"><div class="t" style="left:10.5px;top:25.6px;font-size:13.4px;color:#444;font-weight:400;">pentanoic acid</div></div>
<div class="a" style="left:2015px;top:807px;width:174px;height:44px;overflow:hidden"><div class="t" style="left:10.5px;top:5.6px;font-size:13.4px;color:#444;font-weight:400;letter-spacing:-0.5px">1-KETO-2-</div></div>
<div class="a" style="left:2015px;top:807px;width:174px;height:44px;overflow:hidden"><div class="t" style="left:10.5px;top:25.6px;font-size:13.4px;color:#444;font-weight:400;letter-spacing:-0.5px">METHYLVALERATE</div></div>
<div class="t" style="right:1606.5px;top:922.6px;font-size:13.4px;color:#444;font-weight:400;text-align:right;">1,008</div>
<div class="t" style="right:1431.5px;top:922.6px;font-size:13.4px;color:#444;font-weight:400;text-align:right;">260.13</div>
<div class="t" style="right:1255.5px;top:922.6px;font-size:13.4px;color:#444;font-weight:400;text-align:right;letter-spacing:-0.22px">C6H13O9P</div>
<div class="t" style="right:905.5px;top:922.6px;font-size:13.4px;color:#444;font-weight:400;text-align:right;">7</div>
<div class="t" style="right:730.5px;top:922.6px;font-size:13.4px;color:#444;font-weight:400;text-align:right;">9</div>
<div class="t" style="right:555.5px;top:922.6px;font-size:13.4px;color:#444;font-weight:400;text-align:right;">2</div>
<div class="t" style="right:204.5px;top:922.6px;font-size:13.4px;color:#444;font-weight:400;text-align:right;">BioCyc</div>
<div class="t" style="right:28.5px;top:922.6px;font-size:13.4px;color:#444;font-weight:400;text-align:right;">0.22</div>
<div class="a" style="left:1315px;top:897px;width:174px;height:64px;overflow:hidden"><div class="t" style="left:10.5px;top:5.6px;font-size:13.4px;color:#444;font-weight:400;">(2,3,4,5,6-</div></div>
<div class="a" style="left:1315px;top:897px;width:174px;height:64px;overflow:hidden"><div class="t" style="left:10.5px;top:25.6px;font-size:13.4px;color:#444;font-weight:400;">pentahydroxycyclohexoxy)phosphonic</div></div>
<div class="a" style="left:1315px;top:897px;width:174px;height:64px;overflow:hidden"><div class="t" style="left:10.5px;top:45.6px;font-size:13.4px;color:#444;font-weight:400;">acid</div></div>
<div class="a" style="left:2015px;top:917px;width:174px;height:24px;overflow:hidden"><div class="t" style="left:10.5px;top:5.6px;font-size:13.4px;color:#444;font-weight:400;letter-spacing:-0.5px">1-L-MYO-INOSITOL-1-P</div></div>
<div class="t" style="right:1606.5px;top:1022.6px;font-size:13.4px;color:#444;font-weight:400;text-align:right;">1,009</div>
<div class="t" style="right:1431.5px;top:1022.6px;font-size:13.4px;color:#444;font-weight:400;text-align:right;">473.45</div>
<div class="t" style="right:1255.5px;top:1022.6px;font-size:13.4px;color:#444;font-weight:400;text-align:right;letter-spacing:-0.22px">C20H23N7O7</div>
<div class="t" style="right:905.5px;top:1022.6px;font-size:13.4px;color:#444;font-weight:400;text-align:right;">7</div>
<div class="t" style="right:730.5px;top:1022.6px;font-size:13.4px;color:#444;font-weight:400;text-align:right;">12</div>
<div class="t" style="right:555.5px;top:1022.6px;font-size:13.4px;color:#444;font-weight:400;text-align:right;">9</div>
<div class="t" style="right:204.5px;top:1022.6px;font-size:13.4px;color:#444;font-weight:400;text-align:right;">BioCyc</div>
<div class="t" style="right:28.5px;top:1022.6px;font-size:13.4px;color:#444;font-weight:400;text-align:right;">-1.04</div>
<div class="a" style="left:1315px;top:977px;width:174px;height:104px;overflow:hidden"><div class="t" style="left:10.5px;top:5.6px;font-size:13.4px;color:#444;font-weight:400;">2-[4-[(2-amino-4-hydroxy-</div></div>
<div class="a" style="left:1315px;top:977px;width:174px;height:104px;overflow:hidden"><div class="t" style="left:10.5px;top:25.6px;font-size:13.4px;color:#444;font-weight:400;">5,6,7,8-tetrahydropteridin-6-</div></div>
<div class="a" style="left:1315px;top:977px;width:174px;height:104px;overflow:hidden"><div class="t" style="left:10.5px;top:45.6px;font-size:13.4px;color:#444;font-weight:400;">yl)methyl-formyl-</div></div>
<div class="a" style="left:1315px;top:977px;width:174px;height:104px;overflow:hidden"><div class="t" style="left:10.5px;top:65.6px;font-size:13.4px;color:#444;font-weight:400;">amino]benzoyl]aminoglutaric</div></div>
<div class="a" style="left:1315px;top:977px;width:174px;height:104px;overflow:hidden"><div class="t" style="left:10.5px;top:85.6px;font-size:13.4px;color:#444;font-weight:400;">acid</div></div>
<div class="a" style="left:2015px;top:1017px;width:174px;height:24px;overflow:hidden"><div class="t" style="left:10.5px;top:5.6px;font-size:13.4px;color:#444;font-weight:400;letter-spacing:-0.5px">10-FORMYL-THF</div></div>
<div class="t" style="right:1606.5px;top:1122.6px;font-size:13.4px;color:#444;font-weight:400;text-align:right;">1,010</div>
<div class="t" style="right:1431.5px;top:1122.6px;font-size:13.4px;color:#444;font-weight:400;text-align:right;">98.95</div>
<div class="t" style="right:1255.5px;top:1122.6px;font-size:13.4px;color:#444;font-weight:400;text-align:right;letter-spacing:-0.22px">C2H4Cl2</div>
<div class="t" style="right:905.5px;top:1122.6px;font-size:13.4px;color:#444;font-weight:400;text-align:right;">0</div>
<div class="t" style="right:730.5px;top:1122.6px;font-size:13.4px;color:#444;font-weight:400;text-align:right;">0</div>
<div class="t" style="right:555.5px;top:1122.6px;font-size:13.4px;color:#444;font-weight:400;text-align:right;">1</div>
<div class="t" style="right:204.5px;top:1122.6px;font-size:13.4px;color:#444;font-weight:400;text-align:right;">BioCyc</div>
<div class="t" style="right:28.5px;top:1122.6px;font-size:13.4px;color:#444;font-weight:400;text-align:right;">1.52</div>
<div class="a" style="left:1315px;top:1117px;width:174px;height:24px;overflow:hidden"><div class="t" style="left:10.5px;top:5.6px;font-size:13.4px;color:#444;font-weight:400;">1,2-dichloroethane</div></div>
<div class="a" style="left:2015px;top:1117px;width:174px;height:24px;overflow:hidden"><div class="t" style="left:10.5px;top:5.6px;font-size:13.4px;color:#444;font-weight:400;letter-spacing:-0.5px">12-DICHLOROETHANE</div></div>
<div class="t" style="right:1606.5px;top:1222.6px;font-size:13.4px;color:#444;font-weight:400;text-align:right;">1,011</div>
<div class="t" style="right:1431.5px;top:1222.6px;font-size:13.4px;color:#444;font-weight:400;text-align:right;">181.44</div>
<div class="t" style="right:1255.5px;top:1222.6px;font-size:13.4px;color:#444;font-weight:400;text-align:right;letter-spacing:-0.22px">C6H3Cl3</div>
<div class="t" style="right:905.5px;top:1222.6px;font-size:13.4px;color:#444;font-weight:400;text-align:right;">0</div>
<div class="t" style="right:730.5px;top:1222.6px;font-size:13.4px;color:#444;font-weight:400;text-align:right;">0</div>
<div class="t" style="right:555.5px;top:1222.6px;font-size:13.4px;color:#444;font-weight:400;text-align:right;">0</div>
<div class="t" style="right:204.5px;top:1222.6px;font-size:13.4px;color:#444;font-weight:400;text-align:right;">BioCyc</div>
<div class="t" style="right:28.5px;top:1222.6px;font-size:13.4px;color:#444;font-weight:400;text-align:right;">3.82</div>
<div class="a" style="left:1315px;top:1217px;width:174px;height:24px;overflow:hidden"><div class="t" style="left:10.5px;top:5.6px;font-size:13.4px;color:#444;font-weight:400;">1,2,4-trichlorobenzene</div></div>
<div class="a" style="left:2015px;top:1217px;width:174px;height:24px;overflow:hidden"><div class="t" style="left:10.5px;top:5.6px;font-size:13.4px;color:#444;font-weight:400;letter-spacing:-0.5px">124-TCB</div></div>
<div class="a" style="left:1315px;top:1280px;width:174px;height:18px;overflow:hidden"><div class="t" style="left:10.5px;top:10.2px;font-size:13.4px;color:#444;font-weight:400;">17-hydroxy-10,13-dimethyl-</div></div>
<svg style="left:0;top:0" width="2560" height="1298"><text x="631.8" y="192.1" font-size="7" fill="#1a1a1a" text-anchor="middle" font-family="Liberation Sans" font-weight="bold">H<tspan font-size="5">3</tspan>C</text><line x1="639.2" y1="191.5" x2="650.3" y2="198.1" stroke="#1a1a1a" stroke-width="1.0"/><line x1="650.9" y1="199.1" x2="656.5" y2="195.8" stroke="#1a1a1a" stroke-width="1.0"/><line x1="656.5" y1="195.8" x2="662.1" y2="192.5" stroke="#f01010" stroke-width="1.0"/><line x1="649.7" y1="197.1" x2="655.3" y2="193.8" stroke="#1a1a1a" stroke-width="1.0"/><line x1="655.3" y1="193.8" x2="660.9" y2="190.5" stroke="#f01010" stroke-width="1.0"/><text x="665.5" y="192.1" font-size="7" fill="#f01010" text-anchor="middle" font-family="Liberation Sans" font-weight="bold">O</text><line x1="650.3" y1="198.1" x2="650.3" y2="204.4" stroke="#1a1a1a" stroke-width="1.0"/><line x1="650.3" y1="204.4" x2="650.3" y2="210.7" stroke="#f01010" stroke-width="1.0"/><text x="650.3" y="218.0" font-size="7" fill="#f01010" text-anchor="middle" font-family="Liberation Sans" font-weight="bold">O</text><line x1="654.4" y1="218.1" x2="660.1" y2="221.2" stroke="#f01010" stroke-width="1.0"/><line x1="660.1" y1="221.2" x2="665.8" y2="224.4" stroke="#1a1a1a" stroke-width="1.0"/><line x1="665.8" y1="224.4" x2="680.6" y2="215.9" stroke="#1a1a1a" stroke-width="1.0"/><line x1="680.6" y1="215.9" x2="687.1" y2="219.4" stroke="#1a1a1a" stroke-width="1.0"/><line x1="687.1" y1="219.4" x2="693.6" y2="222.9" stroke="#3a46b0" stroke-width="1.0"/><text x="696.2" y="227.2" font-size="7" fill="#3a46b0" text-anchor="middle" font-family="Liberation Sans" font-weight="bold">N</text><text x="700.0" y="222.8" font-size="5" fill="#3a46b0" text-anchor="middle" font-family="Liberation Sans">+</text><line x1="698.0" y1="220.7" x2="702.5" y2="213.7" stroke="#3a46b0" stroke-width="1.0"/><text x="708.0" y="212.1" font-size="7" fill="#1a1a1a" text-anchor="middle" font-family="Liberation Sans" font-weight="bold">CH<tspan font-size="5">3</tspan></text><line x1="699.9" y1="228.1" x2="706.9" y2="231.8" stroke="#3a46b0" stroke-width="1.0"/><text x="715.0" y="236.5" font-size="7" fill="#1a1a1a" text-anchor="middle" font-family="Liberation Sans" font-weight="bold">CH<tspan font-size="5">3</tspan></text><line x1="694.0" y1="228.8" x2="689.9" y2="235.5" stroke="#3a46b0" stroke-width="1.0"/><text x="684.0" y="241.7" font-size="7" fill="#1a1a1a" text-anchor="middle" font-family="Liberation Sans" font-weight="bold">H<tspan font-size="5">3</tspan>C</text><line x1="665.8" y1="224.4" x2="665.8" y2="242.5" stroke="#1a1a1a" stroke-width="1.0"/><line x1="665.8" y1="242.5" x2="650.3" y2="251.0" stroke="#1a1a1a" stroke-width="1.0"/><line x1="650.9" y1="250.0" x2="645.0" y2="246.6" stroke="#1a1a1a" stroke-width="1.0"/><line x1="645.0" y1="246.6" x2="639.1" y2="243.3" stroke="#f01010" stroke-width="1.0"/><line x1="649.7" y1="252.0" x2="643.8" y2="248.7" stroke="#1a1a1a" stroke-width="1.0"/><line x1="643.8" y1="248.7" x2="637.9" y2="245.3" stroke="#f01010" stroke-width="1.0"/><text x="635.5" y="245.0" font-size="7" fill="#f01010" text-anchor="middle" font-family="Liberation Sans" font-weight="bold">O</text><line x1="650.3" y1="251.0" x2="650.3" y2="257.3" stroke="#1a1a1a" stroke-width="1.0"/><line x1="650.3" y1="257.3" x2="650.3" y2="263.6" stroke="#f01010" stroke-width="1.0"/><text x="651.0" y="270.9" font-size="7" fill="#f01010" text-anchor="middle" font-family="Liberation Sans" font-weight="bold">O</text><text x="655.5" y="267.3" font-size="5" fill="#f01010" text-anchor="middle" font-family="Liberation Sans">-</text><text x="640.7" y="297.3" font-size="11" fill="#f01010" text-anchor="middle" font-family="Liberation Sans">O</text><line x1="638.4" y1="300.5" x2="638.4" y2="309.9" stroke="#f01010" stroke-width="1.5"/><line x1="638.4" y1="309.9" x2="638.4" y2="319.3" stroke="#1a1a1a" stroke-width="1.5"/><line x1="641.8" y1="300.5" x2="641.8" y2="309.9" stroke="#f01010" stroke-width="1.5"/><line x1="641.8" y1="309.9" x2="641.8" y2="319.3" stroke="#1a1a1a" stroke-width="1.5"/><line x1="640.1" y1="319.3" x2="632.6" y2="323.3" stroke="#1a1a1a" stroke-width="1.5"/><line x1="632.6" y1="323.3" x2="625.1" y2="327.3" stroke="#f01010" stroke-width="1.5"/><text x="617.1" y="335.3" font-size="11" fill="#f01010" text-anchor="middle" font-family="Liberation Sans">HO</text><line x1="640.1" y1="319.3" x2="662.2" y2="330.9" stroke="#1a1a1a" stroke-width="1.5"/><line x1="662.2" y1="330.9" x2="684.2" y2="318.3" stroke="#1a1a1a" stroke-width="1.5"/><line x1="684.2" y1="318.3" x2="705.8" y2="330.9" stroke="#1a1a1a" stroke-width="1.5"/><line x1="705.8" y1="330.9" x2="705.8" y2="356.0" stroke="#1a1a1a" stroke-width="1.5"/><line x1="705.8" y1="356.0" x2="684.2" y2="368.4" stroke="#1a1a1a" stroke-width="1.5"/><line x1="684.2" y1="368.4" x2="662.2" y2="356.0" stroke="#1a1a1a" stroke-width="1.5"/><line x1="662.2" y1="356.0" x2="662.2" y2="330.9" stroke="#1a1a1a" stroke-width="1.5"/><line x1="666.1" y1="350.6" x2="666.1" y2="336.2" stroke="#1a1a1a" stroke-width="1.5"/><line x1="699.2" y1="355.3" x2="686.8" y2="362.4" stroke="#1a1a1a" stroke-width="1.5"/><line x1="684.2" y1="318.3" x2="684.2" y2="309.3" stroke="#1a1a1a" stroke-width="1.5"/><line x1="684.2" y1="309.3" x2="684.2" y2="300.3" stroke="#f01010" stroke-width="1.5"/><text x="687.6" y="297.3" font-size="11" fill="#f01010" text-anchor="middle" font-family="Liberation Sans">OH</text><line x1="705.8" y1="330.9" x2="714.0" y2="326.6" stroke="#1a1a1a" stroke-width="1.5"/><line x1="714.0" y1="326.6" x2="722.3" y2="322.3" stroke="#f01010" stroke-width="1.5"/><text x="731.0" y="322.5" font-size="11" fill="#f01010" text-anchor="middle" font-family="Liberation Sans">OH</text><text x="620.1" y="404.6" font-size="14" fill="#f01010" text-anchor="middle" font-family="Liberation Sans">HO</text><line x1="631.7" y1="404.3" x2="643.0" y2="410.6" stroke="#f01010" stroke-width="1.6"/><line x1="643.0" y1="410.6" x2="654.3" y2="417.0" stroke="#1a1a1a" stroke-width="1.6"/><line x1="654.3" y1="417.0" x2="686.0" y2="399.6" stroke="#1a1a1a" stroke-width="1.6"/><line x1="686.0" y1="399.6" x2="698.1" y2="406.0" stroke="#1a1a1a" stroke-width="1.6"/><line x1="698.1" y1="406.0" x2="710.3" y2="412.4" stroke="#3a46b0" stroke-width="1.6"/><text x="711" y="422" font-size="14" fill="#3a46b0" font-family="Liberation Sans">NH<tspan font-size="9" dy="3">2</tspan></text><line x1="654.3" y1="417.0" x2="654.3" y2="443.6" stroke="#1a1a1a" stroke-width="1.6"/><text x="648" y="459" font-size="14" fill="#1a1a1a" font-family="Liberation Sans">CH<tspan font-size="9" dy="3">3</tspan></text><text x="603.9" y="517.7" font-size="10" fill="#f01010" text-anchor="middle" font-family="Liberation Sans">HO</text><text x="593.5" y="555.8" font-size="10" fill="#f01010" text-anchor="middle" font-family="Liberation Sans">HO</text><text x="621.3" y="543.1" font-size="10" fill="#b07818" text-anchor="middle" font-family="Liberation Sans">P</text><line x1="613.2" y1="522.2" x2="619.0" y2="533.7" stroke="#f01010" stroke-width="1.2"/><line x1="616.6" y1="541.8" x2="602.8" y2="548.7" stroke="#f01010" stroke-width="1.2"/><line x1="622.3" y1="546.0" x2="629.2" y2="558.7" stroke="#f01010" stroke-width="1.2"/><line x1="624.9" y1="544.6" x2="631.8" y2="557.3" stroke="#f01010" stroke-width="1.2"/><text x="635.1" y="566.2" font-size="10" fill="#f01010" text-anchor="middle" font-family="Liberation Sans">O</text><line x1="627.0" y1="537.2" x2="639.8" y2="530.3" stroke="#f01010" stroke-width="1.2"/><text x="645.5" y="528.1" font-size="10" fill="#f01010" text-anchor="middle" font-family="Liberation Sans">O</text><line x1="652.5" y1="527.9" x2="661.8" y2="533.1" stroke="#f01010" stroke-width="1.2"/><line x1="661.8" y1="533.1" x2="671.0" y2="538.3" stroke="#1a1a1a" stroke-width="1.2"/><line x1="671.0" y1="538.3" x2="695.2" y2="524.5" stroke="#1a1a1a" stroke-width="1.2"/><line x1="696.8" y1="524.5" x2="696.8" y2="514.1" stroke="#1a1a1a" stroke-width="1.2"/><line x1="696.8" y1="514.1" x2="696.8" y2="503.7" stroke="#f01010" stroke-width="1.2"/><line x1="693.6" y1="524.5" x2="693.6" y2="514.1" stroke="#1a1a1a" stroke-width="1.2"/><line x1="693.6" y1="514.1" x2="693.6" y2="503.7" stroke="#f01010" stroke-width="1.2"/><text x="695.2" y="498.5" font-size="10" fill="#f01010" text-anchor="middle" font-family="Liberation Sans">O</text><line x1="695.2" y1="524.5" x2="720.7" y2="538.3" stroke="#1a1a1a" stroke-width="1.2"/><line x1="720.7" y1="538.3" x2="729.9" y2="533.1" stroke="#1a1a1a" stroke-width="1.2"/><line x1="729.9" y1="533.1" x2="739.1" y2="527.9" stroke="#3a46b0" stroke-width="1.2"/><text x="742" y="528" font-size="10" fill="#3a46b0" font-family="Liberation Sans">NH<tspan font-size="7" dy="2">2</tspan></text><line x1="666.3" y1="616.9" x2="681.4" y2="625.0" stroke="#1a1a1a" stroke-width="1.0"/><line x1="681.4" y1="625.0" x2="681.4" y2="642.4" stroke="#1a1a1a" stroke-width="1.0"/><line x1="681.4" y1="642.4" x2="666.3" y2="651.6" stroke="#1a1a1a" stroke-width="1.0"/><line x1="666.3" y1="651.6" x2="651.3" y2="643.5" stroke="#1a1a1a" stroke-width="1.0"/><line x1="651.3" y1="643.5" x2="651.3" y2="625.0" stroke="#1a1a1a" stroke-width="1.0"/><line x1="651.3" y1="625.0" x2="666.3" y2="616.9" stroke="#1a1a1a" stroke-width="1.0"/><line x1="664.5" y1="621.0" x2="655.9" y2="625.6" stroke="#1a1a1a" stroke-width="1.0"/><line x1="678.7" y1="628.8" x2="678.7" y2="638.8" stroke="#1a1a1a" stroke-width="1.0"/><line x1="664.5" y1="647.4" x2="655.9" y2="642.8" stroke="#1a1a1a" stroke-width="1.0"/><line x1="651.3" y1="625.0" x2="646.7" y2="622.1" stroke="#1a1a1a" stroke-width="1.0"/><line x1="646.7" y1="622.1" x2="642.1" y2="619.3" stroke="#12a012" stroke-width="1.0"/><text x="636.3" y="618.5" font-size="7.5" fill="#12a012" text-anchor="middle" font-family="Liberation Sans">Cl</text><line x1="666.3" y1="616.9" x2="666.3" y2="609.4" stroke="#1a1a1a" stroke-width="1.0"/><line x1="666.3" y1="609.4" x2="666.3" y2="601.9" stroke="#3a46b0" stroke-width="1.0"/><text x="666.3" y="601.1" font-size="7.5" fill="#3a46b0" text-anchor="middle" font-family="Liberation Sans">N</text><line x1="663.4" y1="595.1" x2="655.5" y2="591.0" stroke="#f01010" stroke-width="0.9"/><line x1="662.4" y1="597.1" x2="654.5" y2="593.0" stroke="#f01010" stroke-width="0.9"/><text x="651.3" y="593.1" font-size="7.5" fill="#f01010" text-anchor="middle" font-family="Liberation Sans">O</text><line x1="670.0" y1="596.0" x2="677.0" y2="592.0" stroke="#f01010" stroke-width="1.0"/><text x="682.5" y="593.1" font-size="7.5" fill="#f01010" text-anchor="middle" font-family="Liberation Sans">O</text><line x1="681.4" y1="642.4" x2="687.8" y2="645.8" stroke="#1a1a1a" stroke-width="1.0"/><line x1="687.8" y1="645.8" x2="694.1" y2="649.3" stroke="#3a46b0" stroke-width="1.0"/><text x="697.5" y="653.2" font-size="7.5" fill="#3a46b0" text-anchor="middle" font-family="Liberation Sans">N</text><line x1="701.5" y1="649.0" x2="708.5" y2="645.0" stroke="#f01010" stroke-width="0.9"/><line x1="700.5" y1="647.0" x2="707.5" y2="643.0" stroke="#f01010" stroke-width="0.9"/><text x="711.4" y="645.1" font-size="7.5" fill="#f01010" text-anchor="middle" font-family="Liberation Sans">O</text><line x1="697.5" y1="654.0" x2="697.5" y2="664.3" stroke="#f01010" stroke-width="1.0"/><text x="698.7" y="671.7" font-size="7.5" fill="#f01010" text-anchor="middle" font-family="Liberation Sans">O</text><text x="652.5" y="693.1" font-size="7.5" fill="#3a46b0" text-anchor="middle" font-family="Liberation Sans">NH<tspan font-size="5">2</tspan></text><line x1="647.8" y1="694.0" x2="647.8" y2="710.0" stroke="#1a1a1a" stroke-width="1.0"/><line x1="647.8" y1="710.0" x2="631.7" y2="718.1" stroke="#3a46b0" stroke-width="1.0"/><line x1="631.7" y1="718.1" x2="631.7" y2="737.8" stroke="#3a46b0" stroke-width="1.0"/><line x1="631.7" y1="737.8" x2="647.4" y2="747.0" stroke="#3a46b0" stroke-width="1.0"/><line x1="647.4" y1="747.0" x2="664.0" y2="737.8" stroke="#1a1a1a" stroke-width="1.0"/><line x1="664.0" y1="737.8" x2="664.0" y2="719.3" stroke="#1a1a1a" stroke-width="1.0"/><line x1="664.0" y1="719.3" x2="647.8" y2="710.0" stroke="#1a1a1a" stroke-width="1.0"/><text x="631.7" y="720.8" font-size="7.5" fill="#3a46b0" text-anchor="middle" font-family="Liberation Sans">N</text><text x="647.4" y="749.7" font-size="7.5" fill="#3a46b0" text-anchor="middle" font-family="Liberation Sans">N</text><line x1="634.6" y1="722.4" x2="634.6" y2="733.7" stroke="#3a46b0" stroke-width="1.0"/><line x1="649.5" y1="742.5" x2="659.0" y2="737.2" stroke="#3a46b0" stroke-width="1.0"/><line x1="659.1" y1="719.8" x2="649.8" y2="714.4" stroke="#1a1a1a" stroke-width="1.0"/><line x1="664.0" y1="719.3" x2="681.4" y2="713.5" stroke="#3a46b0" stroke-width="1.0"/><line x1="681.4" y1="713.5" x2="692.9" y2="728.5" stroke="#3a46b0" stroke-width="1.0"/><line x1="692.9" y1="728.5" x2="681.4" y2="743.6" stroke="#3a46b0" stroke-width="1.0"/><line x1="681.4" y1="743.6" x2="664.0" y2="737.8" stroke="#3a46b0" stroke-width="1.0"/><text x="681.4" y="716.2" font-size="7.5" fill="#3a46b0" text-anchor="middle" font-family="Liberation Sans">N</text><text x="681.4" y="746.3" font-size="7.5" fill="#3a46b0" text-anchor="middle" font-family="Liberation Sans">N</text><line x1="681.8" y1="718.8" x2="687.9" y2="726.7" stroke="#3a46b0" stroke-width="1.0"/><line x1="682.5" y1="748.0" x2="687.1" y2="760.9" stroke="#3a46b0" stroke-width="1.0"/><line x1="687.1" y1="760.9" x2="704.0" y2="764.5" stroke="#1a1a1a" stroke-width="1.0"/><text x="710.3" y="769.4" font-size="7.5" fill="#1a1a1a" text-anchor="middle" font-family="Liberation Sans">CH<tspan font-size="5">3</tspan></text><text x="691.8" y="799.6" font-size="11" fill="#f01010" text-anchor="middle" font-family="Liberation Sans">OH</text><line x1="687.1" y1="823.3" x2="687.1" y2="813.5" stroke="#1a1a1a" stroke-width="1.5"/><line x1="687.1" y1="813.5" x2="687.1" y2="803.7" stroke="#f01010" stroke-width="1.5"/><line x1="687.1" y1="823.3" x2="662.9" y2="837.2" stroke="#1a1a1a" stroke-width="1.5"/><text x="646.7" y="816.9" font-size="11" fill="#f01010" text-anchor="middle" font-family="Liberation Sans">HO</text><line x1="662.9" y1="837.2" x2="658.2" y2="828.5" stroke="#1a1a1a" stroke-width="1.5"/><line x1="658.2" y1="828.5" x2="653.6" y2="819.9" stroke="#f01010" stroke-width="1.5"/><line x1="662.9" y1="837.2" x2="639.8" y2="849.9" stroke="#1a1a1a" stroke-width="1.5"/><line x1="639.8" y1="849.9" x2="620.1" y2="839.5" stroke="#1a1a1a" stroke-width="1.5"/><text x="599" y="841" font-size="11" fill="#1a1a1a" font-family="Liberation Sans">H<tspan font-size="7" dy="2">3</tspan><tspan dy="-2">C</tspan></text><line x1="662.9" y1="837.2" x2="673.3" y2="852.2" stroke="#1a1a1a" stroke-width="1.5"/><text x="670" y="864" font-size="11" fill="#1a1a1a" font-family="Liberation Sans">CH<tspan font-size="7" dy="2">3</tspan></text><line x1="687.1" y1="823.3" x2="710.3" y2="836.0" stroke="#1a1a1a" stroke-width="1.5"/><line x1="710.3" y1="836.0" x2="720.1" y2="830.2" stroke="#1a1a1a" stroke-width="1.5"/><line x1="720.1" y1="830.2" x2="729.9" y2="824.5" stroke="#f01010" stroke-width="1.5"/><text x="738.0" y="826.2" font-size="11" fill="#f01010" text-anchor="middle" font-family="Liberation Sans">OH</text><line x1="708.6" y1="836.0" x2="708.6" y2="846.4" stroke="#1a1a1a" stroke-width="1.5"/><line x1="708.6" y1="846.4" x2="708.6" y2="856.8" stroke="#f01010" stroke-width="1.5"/><line x1="712.0" y1="836.0" x2="712.0" y2="846.4" stroke="#1a1a1a" stroke-width="1.5"/><line x1="712.0" y1="846.4" x2="712.0" y2="856.8" stroke="#f01010" stroke-width="1.5"/><text x="710.3" y="867.8" font-size="11" fill="#f01010" text-anchor="middle" font-family="Liberation Sans">O</text><line x1="673.3" y1="923.9" x2="686.0" y2="932.0" stroke="#1a1a1a" stroke-width="1.0"/><line x1="686.0" y1="932.0" x2="686.0" y2="948.2" stroke="#1a1a1a" stroke-width="1.0"/><line x1="686.0" y1="948.2" x2="673.3" y2="955.1" stroke="#1a1a1a" stroke-width="1.0"/><line x1="673.3" y1="955.1" x2="659.9" y2="948.2" stroke="#1a1a1a" stroke-width="1.0"/><line x1="659.9" y1="948.2" x2="659.9" y2="932.0" stroke="#1a1a1a" stroke-width="1.0"/><line x1="659.9" y1="932.0" x2="673.3" y2="923.9" stroke="#1a1a1a" stroke-width="1.0"/><line x1="673.3" y1="923.9" x2="673.3" y2="918.7" stroke="#1a1a1a" stroke-width="1.0"/><line x1="673.3" y1="918.7" x2="673.3" y2="913.5" stroke="#f01010" stroke-width="1.0"/><text x="673.3" y="911.1" font-size="6.5" fill="#f01010" text-anchor="middle" font-family="Liberation Sans">O</text><line x1="677.0" y1="906.0" x2="680.0" y2="904.5" stroke="#f01010" stroke-width="1.0"/><line x1="680.0" y1="904.5" x2="683.0" y2="903.0" stroke="#b07818" stroke-width="1.0"/><text x="686.0" y="904.2" font-size="6.5" fill="#b07818" text-anchor="middle" font-family="Liberation Sans">P</text><line x1="684.0" y1="898.0" x2="681.0" y2="892.0" stroke="#f01010" stroke-width="1.0"/><text x="679.0" y="890.3" font-size="6.5" fill="#f01010" text-anchor="middle" font-family="Liberation Sans">HO</text><line x1="689.0" y1="900.0" x2="695.0" y2="896.5" stroke="#f01010" stroke-width="1.0"/><text x="701.0" y="896.1" font-size="6.5" fill="#f01010" text-anchor="middle" font-family="Liberation Sans">OH</text><line x1="687.1" y1="905.5" x2="690.6" y2="911.5" stroke="#f01010" stroke-width="0.9"/><line x1="688.9" y1="904.5" x2="692.4" y2="910.5" stroke="#f01010" stroke-width="0.9"/><text x="692.9" y="916.9" font-size="6.5" fill="#f01010" text-anchor="middle" font-family="Liberation Sans">O</text><line x1="659.9" y1="932.0" x2="655.5" y2="929.5" stroke="#1a1a1a" stroke-width="1.0"/><line x1="655.5" y1="929.5" x2="651.0" y2="927.0" stroke="#f01010" stroke-width="1.0"/><text x="645.5" y="927.3" font-size="6.5" fill="#f01010" text-anchor="middle" font-family="Liberation Sans">HO</text><line x1="659.9" y1="948.2" x2="655.5" y2="950.6" stroke="#1a1a1a" stroke-width="1.0"/><line x1="655.5" y1="950.6" x2="651.0" y2="953.0" stroke="#f01010" stroke-width="1.0"/><text x="645.5" y="957.3" font-size="6.5" fill="#f01010" text-anchor="middle" font-family="Liberation Sans">HO</text><line x1="686.0" y1="932.0" x2="690.5" y2="929.5" stroke="#1a1a1a" stroke-width="1.0"/><line x1="690.5" y1="929.5" x2="695.0" y2="927.0" stroke="#f01010" stroke-width="1.0"/><text x="701.0" y="927.3" font-size="6.5" fill="#f01010" text-anchor="middle" font-family="Liberation Sans">OH</text><line x1="686.0" y1="948.2" x2="690.5" y2="950.6" stroke="#1a1a1a" stroke-width="1.0"/><line x1="690.5" y1="950.6" x2="695.0" y2="953.0" stroke="#f01010" stroke-width="1.0"/><text x="701.0" y="957.3" font-size="6.5" fill="#f01010" text-anchor="middle" font-family="Liberation Sans">OH</text><line x1="673.3" y1="955.1" x2="673.3" y2="960.8" stroke="#1a1a1a" stroke-width="1.0"/><line x1="673.3" y1="960.8" x2="673.3" y2="966.5" stroke="#f01010" stroke-width="1.0"/><text x="674.4" y="973.6" font-size="6.5" fill="#f01010" text-anchor="middle" font-family="Liberation Sans">OH</text><text x="591.1" y="1036.7" font-size="5.5" fill="#f01010" text-anchor="middle" font-family="Liberation Sans">HO</text><text x="602.3" y="1018.1" font-size="5.5" fill="#f01010" text-anchor="middle" font-family="Liberation Sans">O</text><line x1="596.1" y1="1033.5" x2="599.2" y2="1031.0" stroke="#f01010" stroke-width="0.8"/><line x1="599.2" y1="1031.0" x2="602.3" y2="1028.5" stroke="#1a1a1a" stroke-width="0.8"/><line x1="602.3" y1="1019.8" x2="602.3" y2="1024.2" stroke="#f01010" stroke-width="0.8"/><line x1="602.3" y1="1024.2" x2="602.3" y2="1028.5" stroke="#1a1a1a" stroke-width="0.8"/><line x1="604.3" y1="1019.8" x2="604.3" y2="1023.8" stroke="#f01010" stroke-width="0.8"/><line x1="604.3" y1="1023.8" x2="604.3" y2="1027.8" stroke="#1a1a1a" stroke-width="0.8"/><line x1="602.3" y1="1028.5" x2="613.5" y2="1034.7" stroke="#1a1a1a" stroke-width="0.8"/><line x1="613.5" y1="1034.7" x2="621.0" y2="1029.8" stroke="#1a1a1a" stroke-width="0.8"/><text x="623.5" y="1029.3" font-size="5.5" fill="#3a46b0" text-anchor="middle" font-family="Liberation Sans">N</text><text x="623.5" y="1025.0" font-size="5.5" fill="#3a46b0" text-anchor="middle" font-family="Liberation Sans">H</text><line x1="613.5" y1="1034.7" x2="613.5" y2="1047.2" stroke="#1a1a1a" stroke-width="0.8"/><line x1="613.5" y1="1047.2" x2="602.3" y2="1053.4" stroke="#1a1a1a" stroke-width="0.8"/><line x1="602.3" y1="1053.4" x2="602.3" y2="1067.1" stroke="#1a1a1a" stroke-width="0.8"/><line x1="602.3" y1="1067.1" x2="598.6" y2="1069.0" stroke="#1a1a1a" stroke-width="0.8"/><line x1="598.6" y1="1069.0" x2="594.9" y2="1070.8" stroke="#f01010" stroke-width="0.8"/><text x="591.1" y="1074.1" font-size="5.5" fill="#f01010" text-anchor="middle" font-family="Liberation Sans">HO</text><line x1="602.3" y1="1067.1" x2="606.1" y2="1069.0" stroke="#1a1a1a" stroke-width="0.8"/><line x1="606.1" y1="1069.0" x2="609.8" y2="1070.8" stroke="#f01010" stroke-width="0.8"/><text x="612.3" y="1074.1" font-size="5.5" fill="#f01010" text-anchor="middle" font-family="Liberation Sans">O</text><line x1="626.0" y1="1029.8" x2="634.7" y2="1034.7" stroke="#1a1a1a" stroke-width="0.8"/><line x1="634.7" y1="1034.7" x2="634.7" y2="1039.7" stroke="#1a1a1a" stroke-width="0.8"/><line x1="634.7" y1="1039.7" x2="634.7" y2="1044.7" stroke="#f01010" stroke-width="0.8"/><line x1="636.4" y1="1035.2" x2="636.4" y2="1040.0" stroke="#1a1a1a" stroke-width="0.8"/><line x1="636.4" y1="1040.0" x2="636.4" y2="1044.7" stroke="#f01010" stroke-width="0.8"/><text x="634.7" y="1049.7" font-size="5.5" fill="#f01010" text-anchor="middle" font-family="Liberation Sans">O</text><line x1="634.7" y1="1034.7" x2="644.6" y2="1028.5" stroke="#1a1a1a" stroke-width="0.8"/><line x1="644.6" y1="1028.5" x2="644.6" y2="1016.1" stroke="#1a1a1a" stroke-width="0.8"/><line x1="644.6" y1="1016.1" x2="655.8" y2="1009.9" stroke="#1a1a1a" stroke-width="0.8"/><line x1="655.8" y1="1009.9" x2="667.0" y2="1016.1" stroke="#1a1a1a" stroke-width="0.8"/><line x1="667.0" y1="1016.1" x2="667.0" y2="1028.5" stroke="#1a1a1a" stroke-width="0.8"/><line x1="667.0" y1="1028.5" x2="655.8" y2="1034.7" stroke="#1a1a1a" stroke-width="0.8"/><line x1="655.8" y1="1034.7" x2="644.6" y2="1028.5" stroke="#1a1a1a" stroke-width="0.8"/><line x1="647.6" y1="1027.3" x2="647.6" y2="1017.3" stroke="#1a1a1a" stroke-width="0.8"/><line x1="657.6" y1="1012.3" x2="665.1" y2="1016.8" stroke="#1a1a1a" stroke-width="0.8"/><line x1="665.1" y1="1027.8" x2="657.6" y2="1032.3" stroke="#1a1a1a" stroke-width="0.8"/><line x1="667.0" y1="1016.1" x2="675.0" y2="1011.8" stroke="#1a1a1a" stroke-width="0.8"/><text x="677.0" y="1013.1" font-size="5.5" fill="#3a46b0" text-anchor="middle" font-family="Liberation Sans">N</text><line x1="677.0" y1="1008.6" x2="677.0" y2="998.6" stroke="#1a1a1a" stroke-width="0.8"/><line x1="677.0" y1="998.6" x2="680.7" y2="996.2" stroke="#1a1a1a" stroke-width="0.8"/><line x1="680.7" y1="996.2" x2="684.5" y2="993.7" stroke="#f01010" stroke-width="0.8"/><line x1="678.0" y1="1000.4" x2="681.5" y2="998.2" stroke="#1a1a1a" stroke-width="0.8"/><line x1="681.5" y1="998.2" x2="685.0" y2="995.9" stroke="#f01010" stroke-width="0.8"/><text x="687.0" y="994.4" font-size="5.5" fill="#f01010" text-anchor="middle" font-family="Liberation Sans">O</text><line x1="679.0" y1="1012.3" x2="689.4" y2="1016.1" stroke="#1a1a1a" stroke-width="0.8"/><line x1="689.4" y1="1016.1" x2="698.2" y2="1011.1" stroke="#1a1a1a" stroke-width="0.8"/><line x1="698.2" y1="1011.1" x2="698.2" y2="998.6" stroke="#1a1a1a" stroke-width="0.8"/><line x1="698.2" y1="998.6" x2="709.4" y2="992.4" stroke="#1a1a1a" stroke-width="0.8"/><line x1="709.4" y1="992.4" x2="720.6" y2="998.6" stroke="#1a1a1a" stroke-width="0.8"/><line x1="720.6" y1="998.6" x2="720.6" y2="1011.1" stroke="#1a1a1a" stroke-width="0.8"/><line x1="720.6" y1="1011.1" x2="709.4" y2="1016.1" stroke="#1a1a1a" stroke-width="0.8"/><line x1="709.4" y1="1016.1" x2="698.2" y2="1011.1" stroke="#1a1a1a" stroke-width="0.8"/><text x="709.4" y="990.7" font-size="5.5" fill="#3a46b0" text-anchor="middle" font-family="Liberation Sans">H</text><text x="709.4" y="994.4" font-size="5.5" fill="#3a46b0" text-anchor="middle" font-family="Liberation Sans">N</text><text x="709.4" y="1018.1" font-size="5.5" fill="#3a46b0" text-anchor="middle" font-family="Liberation Sans">N</text><text x="709.4" y="1022.3" font-size="5.5" fill="#3a46b0" text-anchor="middle" font-family="Liberation Sans">H</text><line x1="720.6" y1="998.6" x2="731.8" y2="992.4" stroke="#1a1a1a" stroke-width="0.8"/><line x1="731.8" y1="992.4" x2="743.0" y2="998.6" stroke="#1a1a1a" stroke-width="0.8"/><line x1="743.0" y1="998.6" x2="743.0" y2="1011.1" stroke="#1a1a1a" stroke-width="0.8"/><line x1="743.0" y1="1011.1" x2="731.8" y2="1017.3" stroke="#1a1a1a" stroke-width="0.8"/><line x1="731.8" y1="1017.3" x2="720.6" y2="1011.1" stroke="#1a1a1a" stroke-width="0.8"/><line x1="720.6" y1="1011.1" x2="720.6" y2="998.6" stroke="#1a1a1a" stroke-width="0.8"/><text x="731.8" y="994.4" font-size="5.5" fill="#3a46b0" text-anchor="middle" font-family="Liberation Sans">N</text><text x="743.0" y="1013.1" font-size="5.5" fill="#3a46b0" text-anchor="middle" font-family="Liberation Sans">N</text><line x1="722.3" y1="1001.1" x2="730.0" y2="996.9" stroke="#1a1a1a" stroke-width="0.8"/><line x1="741.2" y1="1008.6" x2="733.5" y2="1014.8" stroke="#1a1a1a" stroke-width="0.8"/><line x1="743.0" y1="998.6" x2="751.7" y2="993.7" stroke="#1a1a1a" stroke-width="0.8"/><text x="756.7" y="994.4" font-size="5.5" fill="#3a46b0" text-anchor="middle" font-family="Liberation Sans">NH<tspan font-size="4">2</tspan></text><line x1="731.8" y1="1017.3" x2="731.8" y2="1021.7" stroke="#1a1a1a" stroke-width="0.8"/><line x1="731.8" y1="1021.7" x2="731.8" y2="1026.0" stroke="#f01010" stroke-width="0.8"/><text x="731.8" y="1030.5" font-size="5.5" fill="#f01010" text-anchor="middle" font-family="Liberation Sans">OH</text><text x="594.9" y="1122.5" font-size="23" fill="#12a012" text-anchor="middle" font-family="Liberation Sans">Cl</text><line x1="608.5" y1="1123.1" x2="627.8" y2="1133.7" stroke="#12a012" stroke-width="2.3"/><line x1="627.8" y1="1133.7" x2="647.1" y2="1144.3" stroke="#1a1a1a" stroke-width="2.3"/><line x1="647.1" y1="1144.3" x2="700.7" y2="1114.4" stroke="#1a1a1a" stroke-width="2.3"/><line x1="700.7" y1="1114.4" x2="720.0" y2="1125.0" stroke="#1a1a1a" stroke-width="2.3"/><line x1="720.0" y1="1125.0" x2="739.2" y2="1135.6" stroke="#12a012" stroke-width="2.3"/><text x="752.9" y="1152.5" font-size="23" fill="#12a012" text-anchor="middle" font-family="Liberation Sans">Cl</text><line x1="673.3" y1="1217.7" x2="694.4" y2="1228.9" stroke="#1a1a1a" stroke-width="1.5"/><line x1="694.4" y1="1228.9" x2="694.4" y2="1252.6" stroke="#1a1a1a" stroke-width="1.5"/><line x1="694.4" y1="1252.6" x2="673.3" y2="1265.0" stroke="#1a1a1a" stroke-width="1.5"/><line x1="673.3" y1="1265.0" x2="653.4" y2="1252.6" stroke="#1a1a1a" stroke-width="1.5"/><line x1="653.4" y1="1252.6" x2="653.4" y2="1228.9" stroke="#1a1a1a" stroke-width="1.5"/><line x1="653.4" y1="1228.9" x2="673.3" y2="1217.7" stroke="#1a1a1a" stroke-width="1.5"/><line x1="659.5" y1="1229.7" x2="670.9" y2="1223.3" stroke="#1a1a1a" stroke-width="1.5"/><line x1="690.7" y1="1234.0" x2="690.7" y2="1247.6" stroke="#1a1a1a" stroke-width="1.5"/><line x1="670.9" y1="1259.1" x2="659.5" y2="1252.0" stroke="#1a1a1a" stroke-width="1.5"/><line x1="673.3" y1="1217.7" x2="673.3" y2="1209.0" stroke="#1a1a1a" stroke-width="1.5"/><line x1="673.3" y1="1209.0" x2="673.3" y2="1200.3" stroke="#12a012" stroke-width="1.5"/><text x="673.3" y="1196.8" font-size="11" fill="#12a012" text-anchor="middle" font-family="Liberation Sans">Cl</text><line x1="653.4" y1="1228.9" x2="645.9" y2="1225.2" stroke="#1a1a1a" stroke-width="1.5"/><line x1="645.9" y1="1225.2" x2="638.4" y2="1221.4" stroke="#12a012" stroke-width="1.5"/><text x="631.0" y="1220.5" font-size="11" fill="#12a012" text-anchor="middle" font-family="Liberation Sans">Cl</text><line x1="694.4" y1="1252.6" x2="701.9" y2="1256.9" stroke="#1a1a1a" stroke-width="1.5"/><line x1="701.9" y1="1256.9" x2="709.4" y2="1261.3" stroke="#12a012" stroke-width="1.5"/><text x="716.0" y="1267.8" font-size="11" fill="#12a012" text-anchor="middle" font-family="Liberation Sans">Cl</text><text x="704" y="1297" font-size="9" fill="#1a1a1a" font-family="Liberation Sans">CH<tspan font-size="6" dy="2">3</tspan></text><text x="734.3" y="1292.4" font-size="9" fill="#f01010" text-anchor="middle" font-family="Liberation Sans">OH</text><line x1="732.0" y1="1293.0" x2="729.0" y2="1298.0" stroke="#f01010" stroke-width="1.2"/></svg>
<div class="a" style="left:2542px;top:179px;width:16.5px;height:1119px;background:#f1f1f1"></div>
<svg style="left:2542px;top:179px" width="17" height="1119"><path d="M4.5 11l4-4 4 4z" fill="#a3a3a3"/><rect x="2" y="17" width="13" height="17" fill="#c1c1c1"/><path d="M4.5 1107l4 4 4-4z" fill="#505050"/></svg>
<div class="a" style="left:782px;top:167px;width:239px;height:172px;background:#fff;border-radius:6px;box-shadow:0 6px 14px rgba(0,0,0,0.26),0 2px 4px rgba(0,0,0,0.14);overflow:hidden"><div class="a" style="left:0;top:8px;width:239px;height:52px;background:#f7f7f7"></div><div class="a" style="left:0;top:60px;width:239px;height:1px;background:#e2e2e2"></div><div class="a" style="left:0;top:111.5px;width:239px;height:1px;background:#e2e2e2"></div></div>
<svg style="left:800px;top:189px" width="24" height="24" viewBox="0 0 24 24"><path fill="#1a1a1a" d="M10 18h4v-2h-4v2zM3 6v2h18V6H3zm3 7h12v-2H6v2z"/></svg>
<div class="t" style="left:841.0px;top:194.7px;font-size:13.5px;color:#333;font-weight:400;">Add to filter</div>
<div class="t" style="left:800.3px;top:246.4px;font-size:13.5px;color:#333;font-weight:400;letter-spacing:-0.15px">Edit columns</div>
<div class="t" style="left:800.3px;top:298.6px;font-size:13.5px;color:#333;font-weight:400;letter-spacing:-0.25px">Freeze column</div>
<svg style="left:944.5px;top:213.5px" width="26" height="30" viewBox="0 0 23.2 30" preserveAspectRatio="none"><path d="M6.5 4.2c0-1.3 2.6-1.3 2.6 0v8.3c0-1.1 2.5-1.1 2.5 0v1.2c0-1.1 2.5-1.1 2.5 0v1c0-1.1 2.4-1.1 2.4 0.2v6.1c0 3.3-2.2 5.6-5.6 5.6c-2.7 0-4-1.3-5.3-3.3l-3.2-5.2c-0.7-1.1 0.7-2.3 1.8-1.4l2.3 2.3z" fill="#fff" stroke="#1b2340" stroke-width="1.3" stroke-linejoin="round"/><path d="M11.6 13.5v4M14.1 14.8v3.2" stroke="#1b2340" stroke-width="1"/></svg>
</body></html>
